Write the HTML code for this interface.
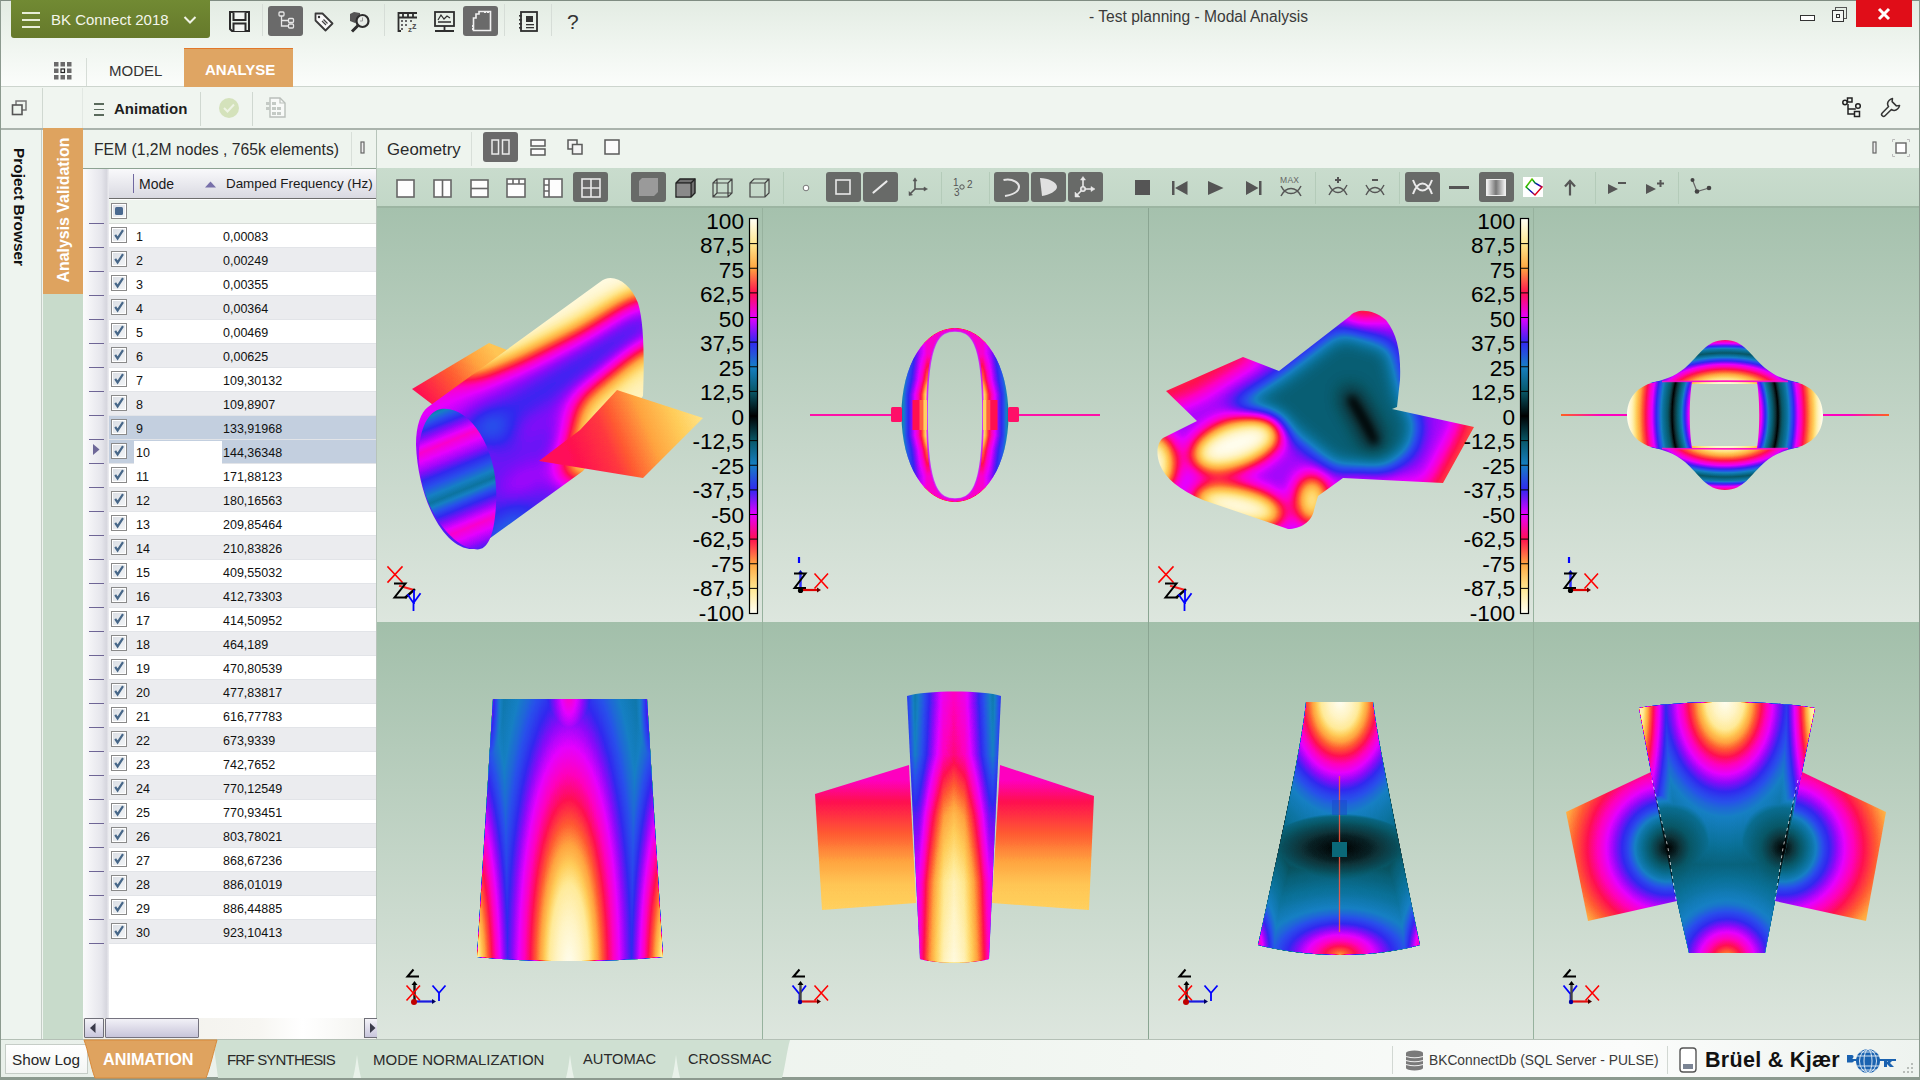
<!DOCTYPE html>
<html><head><meta charset="utf-8">
<style>
*{box-sizing:border-box;margin:0;padding:0}
html,body{width:1920px;height:1080px;overflow:hidden;background:#eef4ef;font-family:"Liberation Sans",sans-serif;color:#222}
.a{position:absolute}
.t{position:absolute;white-space:nowrap;line-height:1}
.rt{font-size:12.5px;color:#111}
.cb{position:absolute;left:111px;width:16px;height:16px;border:1px solid #8a8a8a;background:linear-gradient(135deg,#d9dde3,#f4f6f8);box-shadow:inset 0 0 0 1px #fff}
.cb svg{position:absolute;left:0;top:0}
.ib{position:absolute;background:#6a6a6a;border-radius:3px}
.sep{position:absolute;width:1px;background:#d6ddd7}
svg{position:absolute;overflow:visible}
</style></head><body>
<div class="a" style="left:0;top:0;width:1920px;height:1080px;border:1px solid #8c9a8f;border-top-color:#7f8c82"></div>
<!-- title/ribbon area -->
<div class="a" style="left:1px;top:1px;width:1918px;height:85px;background:linear-gradient(#e3ece3,#eef4ee 45%,#fbfdfb)"></div>
<div class="a" style="left:1px;top:86px;width:1918px;height:1px;background:#cdd5ce"></div>
<div class="a" style="left:1px;top:87px;width:1918px;height:41px;background:#f0f5f0"></div>
<div class="a" style="left:1px;top:128px;width:1918px;height:2px;background:#aab3ac"></div>

<!-- green app button -->
<div class="a" style="left:11px;top:0;width:199px;height:38px;background:linear-gradient(#718a33,#66792b);border-radius:0 0 3px 3px"></div>
<div class="a" style="left:22px;top:12px;width:18px;height:2px;background:#e8eed8"></div>
<div class="a" style="left:22px;top:19px;width:18px;height:2px;background:#e8eed8"></div>
<div class="a" style="left:22px;top:26px;width:18px;height:2px;background:#e8eed8"></div>
<div class="t" style="left:51px;top:12px;font-size:15px;color:#f4f6ea">BK Connect 2018</div>
<svg style="left:183px;top:15px" width="14" height="10"><path d="M1.5 2 L7 7.5 L12.5 2" stroke="#f0f3e6" stroke-width="2" fill="none"/></svg>

<!-- title -->
<div class="t" style="left:1089px;top:9px;font-size:15.6px;color:#3a3a3a">- Test planning - Modal Analysis</div>
<div class="a" style="left:1800px;top:15px;width:15px;height:6px;border:1.5px solid #333;background:#fff"></div>
<div class="a" style="left:1835px;top:7px;width:12px;height:12px;border:1.5px solid #555"></div>
<div class="a" style="left:1832px;top:10px;width:12px;height:12px;border:1.5px solid #333;background:#f2f6f2"></div>
<div class="a" style="left:1836px;top:14px;width:4px;height:4px;border:1.5px solid #333"></div>
<div class="a" style="left:1856px;top:0;width:56px;height:27px;background:#e00d18"></div>
<svg style="left:1878px;top:8px" width="12" height="12"><path d="M1 1 L11 11 M11 1 L1 11" stroke="#fff" stroke-width="3"/></svg>

<!-- tabs row -->
<div class="a" style="left:184px;top:48px;width:109px;height:39px;background:#dfa563;border-top:1px solid #e2782b"></div>
<div class="t" style="left:205px;top:62px;font-size:15px;font-weight:700;color:#fff">ANALYSE</div>
<div class="t" style="left:109px;top:63px;font-size:15px;color:#333">MODEL</div>

<!-- animation row -->
<div class="t" style="left:114px;top:101px;font-size:15px;font-weight:700;color:#1e1e1e">Animation</div>

<!-- ribbon icons -->
<svg style="left:229px;top:11px" width="21" height="21" viewBox="0 0 21 21"><path d="M1 1 H20 V20 H3 L1 18Z" fill="none" stroke="#2a2a2a" stroke-width="2"/><path d="M4.5 1.5 V9 H16.5 V1.5 M4.5 20 V12.5 H16.5 V20" fill="#f2f5f2" stroke="#2a2a2a" stroke-width="2"/></svg>
<div class="sep" style="left:262px;top:4px;height:32px"></div>
<div class="ib" style="left:268px;top:6px;width:35px;height:30px"></div>
<svg style="left:278px;top:11px" width="17" height="18" viewBox="0 0 17 18"><g fill="none" stroke="#e6e6e6" stroke-width="1.3"><rect x="1" y="1" width="5" height="4" rx="1"/><rect x="10.5" y="7.5" width="5" height="4" rx="1"/><rect x="10.5" y="13" width="5" height="4" rx="1"/><path d="M3.5 5 V15 H10.5 M3.5 9.5 H10.5"/></g></svg>
<svg style="left:314px;top:12px" width="20" height="20" viewBox="0 0 20 20"><path d="M1.5 1.5 H8.5 L18.5 11.5 L11.5 18.5 L1.5 8.5Z" fill="#fafafa" stroke="#3a3a3a" stroke-width="1.8" stroke-linejoin="round"/><circle cx="5" cy="5" r="1.2" fill="#333"/><path d="M8 9 L12 13 M9.5 7.5 L13.5 11.5" stroke="#444" stroke-width="1.2"/></svg>
<svg style="left:349px;top:11px" width="22" height="22" viewBox="0 0 22 22"><path d="M1 3 L5 1 L11 2 V10 L6 12 L1 10Z" fill="#555"/><circle cx="13.5" cy="10" r="6" fill="#e8ede8" stroke="#2e2e2e" stroke-width="2.2"/><path d="M9 14.5 L3 20.5" stroke="#2e2e2e" stroke-width="3"/><path d="M13.5 6.5 V10 H11" stroke="#999" stroke-width="1" fill="none"/></svg>
<div class="sep" style="left:384px;top:4px;height:32px"></div>
<svg style="left:397px;top:11px" width="21" height="21" viewBox="0 0 21 21"><g stroke="#2e2e2e" fill="none" stroke-width="1.8"><path d="M1 2 H20 M1 6.5 H20 M1.5 1 V20 H4 M6 1 V6.5 M11 1 V6.5 M16 1 V6.5"/></g><g fill="#666"><rect x="4" y="9" width="2" height="2"/><rect x="4" y="13" width="2" height="2"/><rect x="4" y="17" width="2" height="2"/><rect x="8" y="9" width="2" height="2"/><rect x="8" y="13" width="2" height="2"/><rect x="13" y="9" width="2" height="2"/></g><text x="11" y="21" font-size="8" font-weight="700" fill="#555" font-family="Liberation Sans">z</text><text x="15" y="18" font-size="9" font-weight="700" fill="#555" font-family="Liberation Sans">z</text></svg>
<svg style="left:434px;top:11px" width="21" height="21" viewBox="0 0 21 21"><g stroke="#2e2e2e" fill="none" stroke-width="1.8"><rect x="1" y="1" width="19" height="14"/><path d="M10.5 15 V19 M1 20 H20"/><path d="M4 9 L7 4 L10 8 L13 5 L16 7" stroke-width="1.2"/><path d="M4 11 H17" stroke-width="1.5"/></g></svg>
<div class="ib" style="left:463px;top:6px;width:35px;height:30px"></div>
<svg style="left:471px;top:10px" width="21" height="22" viewBox="0 0 21 22"><path d="M8 1.5 H19.5 V20.5 H2.5 V8 H5 V4 H8Z" fill="none" stroke="#f0f0f0" stroke-width="1.6"/><rect x="13" y="1" width="2" height="2" fill="#f0f0f0"/><rect x="16" y="1" width="2" height="2" fill="#f0f0f0"/><rect x="1" y="15" width="2" height="2" fill="#f0f0f0"/><rect x="1" y="18" width="2" height="2" fill="#f0f0f0"/></svg>
<div class="sep" style="left:504px;top:4px;height:32px"></div>
<svg style="left:518px;top:11px" width="20" height="21" viewBox="0 0 20 21"><rect x="3" y="1" width="16" height="19" fill="none" stroke="#2e2e2e" stroke-width="1.8"/><g fill="#333"><rect x="1" y="4" width="3" height="1.6"/><rect x="1" y="8" width="3" height="1.6"/><rect x="1" y="12" width="3" height="1.6"/><rect x="1" y="16" width="3" height="1.6"/><rect x="8" y="5" width="7" height="6"/><rect x="8" y="13" width="8" height="1.3"/><rect x="8" y="16" width="8" height="1.3"/></g></svg>
<div class="sep" style="left:551px;top:4px;height:32px"></div>
<div class="t" style="left:567px;top:11px;font-size:21px;color:#333">?</div>

<!-- second row: grid icon + separators -->
<svg style="left:54px;top:62px" width="18" height="18" viewBox="0 0 18 18"><g fill="#6a6a6a"><rect x="0" y="0" width="4.5" height="4.5"/><rect x="6.5" y="0" width="4.5" height="4.5"/><rect x="13" y="0" width="4.5" height="4.5"/><rect x="0" y="6.5" width="4.5" height="4.5"/><rect x="13" y="6.5" width="4.5" height="4.5"/><rect x="0" y="13" width="4.5" height="4.5"/><rect x="6.5" y="13" width="4.5" height="4.5"/><rect x="13" y="13" width="4.5" height="4.5"/></g><rect x="7" y="7" width="3.5" height="3.5" fill="none" stroke="#222" stroke-width="1.2"/></svg>
<div class="sep" style="left:86px;top:58px;height:28px"></div>

<!-- third row icons -->
<svg style="left:11px;top:100px" width="17" height="16" viewBox="0 0 17 16"><rect x="5" y="1" width="10" height="9" fill="none" stroke="#777" stroke-width="1.5"/><rect x="1.5" y="5" width="9.5" height="9.5" fill="#eef4ee" stroke="#555" stroke-width="1.6"/></svg>
<div class="sep" style="left:42px;top:88px;height:40px;background:#d0d8d1"></div>
<div class="sep" style="left:82px;top:88px;height:40px;background:#e2e8e3"></div>
<div class="a" style="left:94px;top:103px;width:10px;height:1.5px;background:#5a6a5c"></div>
<div class="a" style="left:94px;top:108.5px;width:10px;height:1.5px;background:#5a6a5c"></div>
<div class="a" style="left:94px;top:114px;width:10px;height:1.5px;background:#5a6a5c"></div>
<div class="sep" style="left:200px;top:92px;height:34px;background:#d0d8d1"></div>
<svg style="left:218px;top:97px" width="22" height="22" viewBox="0 0 22 22"><circle cx="11" cy="11" r="10" fill="#d4e2bb"/><path d="M6 11 L9.5 14.5 L16 7.5" stroke="#eef4e4" stroke-width="2" fill="none"/></svg>
<div class="sep" style="left:252px;top:92px;height:34px;background:#d0d8d1"></div>
<svg style="left:265px;top:97px" width="22" height="21" viewBox="0 0 22 21"><path d="M5 1 H15 L20 6 V20 H5Z" fill="#f8faf8" stroke="#b9bfba" stroke-width="1.4"/><path d="M15 1 V6 H20" fill="none" stroke="#b9bfba" stroke-width="1.2"/><g fill="#c4cac5"><rect x="1" y="5" width="4" height="3"/><rect x="7" y="5" width="4" height="3"/><rect x="1" y="10" width="4" height="3"/><rect x="7" y="10" width="4" height="3"/><rect x="12" y="10" width="4" height="3"/><rect x="7" y="15" width="4" height="3"/><rect x="12" y="15" width="4" height="3"/></g></svg>

<!-- right side of row 3 -->
<svg style="left:1842px;top:97px" width="20" height="22" viewBox="0 0 20 22"><g fill="none" stroke="#222" stroke-width="1.5"><rect x="5.5" y="1" width="4.5" height="4"/><circle cx="3" cy="5.5" r="2.2"/><circle cx="16" cy="9" r="2.3"/><rect x="12.5" y="14.5" width="5" height="5"/><path d="M6 7 V17 H12.5 M6 12 H13.8"/></g></svg>
<svg style="left:1879px;top:97px" width="22" height="22" viewBox="0 0 22 22"><path transform="rotate(45 11 11)" d="M9 11 V20 A2 2 0 0 0 13 20 V11 C16 10.5 17 8 17 6 C17 4.5 16.5 3.2 16 2.5 L14 5 H8 L6 2.5 C5.5 3.2 5 4.5 5 6 C5 8 6 10.5 9 11Z" fill="none" stroke="#333" stroke-width="1.5" stroke-linejoin="round"/></svg>

<!-- left strip -->
<div class="a" style="left:41px;top:130px;width:1px;height:909px;background:#c4cdc6"></div>
<div class="a" style="left:43px;top:130px;width:40px;height:909px;background:#c8dbcb"></div>
<div class="a" style="left:43px;top:128px;width:40px;height:166px;background:#dea35f"></div>

<!-- list panel -->
<div class="a" style="left:83px;top:130px;width:293px;height:38px;background:#eef4ee"></div>
<div class="t" style="left:94px;top:142px;font-size:15.7px;color:#2a2a2a">FEM (1,2M nodes , 765k elements)</div>
<div class="sep" style="left:351px;top:132px;height:34px;background:#d8dfd9"></div>
<svg style="left:360px;top:141px" width="6" height="13" viewBox="0 0 6 13"><rect x="1" y="1" width="3" height="11" fill="#eee" stroke="#666" stroke-width="1.2"/></svg>
<div class="a" style="left:83px;top:168px;width:293px;height:1px;background:#8da292"></div>
<div class="a" style="left:83px;top:169px;width:293px;height:870px;background:#fff"></div>
<div class="a" style="left:83px;top:169px;width:26px;height:849px;background:linear-gradient(90deg,#fbfbfc,#e6e6ec 70%,#d6d6de 90%,#eeeef2)"></div>
<div class="a" style="left:109px;top:169px;width:267px;height:30px;background:linear-gradient(#f9f9fb,#e6e6ec 60%,#d9d9e1);border-bottom:1px solid #6d6d6d"></div>
<div class="a" style="left:133px;top:174px;width:1px;height:19px;background:#7068a0"></div>
<div class="t" style="left:139px;top:177px;font-size:14px;color:#1a1a1a">Mode</div>
<svg style="left:205px;top:181px" width="11" height="7"><path d="M0 6.5 L5.5 0.5 L11 6.5Z" fill="#7870aa"/></svg>
<div class="t" style="left:226px;top:177px;font-size:13.4px;color:#1a1a1a">Damped Frequency (Hz)</div>
<div class="a" style="left:109px;top:200px;width:267px;height:24px;background:#eef4ee;border-bottom:1px solid #d8dcd8"></div>
<div class="cb" style="top:203px"><div class="a" style="left:3px;top:3px;width:8px;height:8px;background:#49698f;border-radius:1.5px"></div></div>
<div class="a" style="left:109px;top:224px;width:267px;height:24px;background:#ffffff;border-bottom:1px solid #e2e4e8"></div>
<div class="cb" style="top:227px"><svg width="14" height="14" viewBox="0 0 14 14"><path d="M3.2 6.8 L5.6 10.4 L11 2.2" stroke="#476788" stroke-width="2.2" fill="none"/></svg></div>
<div class="t rt" style="top:231px;left:136px">1</div>
<div class="t rt" style="top:231px;left:223px">0,00083</div>
<div class="a" style="left:89px;top:247px;width:15px;height:1px;background:#6e6595"></div>
<div class="a" style="left:109px;top:248px;width:267px;height:24px;background:#ebecef;border-bottom:1px solid #e2e4e8"></div>
<div class="cb" style="top:251px"><svg width="14" height="14" viewBox="0 0 14 14"><path d="M3.2 6.8 L5.6 10.4 L11 2.2" stroke="#476788" stroke-width="2.2" fill="none"/></svg></div>
<div class="t rt" style="top:255px;left:136px">2</div>
<div class="t rt" style="top:255px;left:223px">0,00249</div>
<div class="a" style="left:89px;top:271px;width:15px;height:1px;background:#6e6595"></div>
<div class="a" style="left:109px;top:272px;width:267px;height:24px;background:#ffffff;border-bottom:1px solid #e2e4e8"></div>
<div class="cb" style="top:275px"><svg width="14" height="14" viewBox="0 0 14 14"><path d="M3.2 6.8 L5.6 10.4 L11 2.2" stroke="#476788" stroke-width="2.2" fill="none"/></svg></div>
<div class="t rt" style="top:279px;left:136px">3</div>
<div class="t rt" style="top:279px;left:223px">0,00355</div>
<div class="a" style="left:89px;top:295px;width:15px;height:1px;background:#6e6595"></div>
<div class="a" style="left:109px;top:296px;width:267px;height:24px;background:#ebecef;border-bottom:1px solid #e2e4e8"></div>
<div class="cb" style="top:299px"><svg width="14" height="14" viewBox="0 0 14 14"><path d="M3.2 6.8 L5.6 10.4 L11 2.2" stroke="#476788" stroke-width="2.2" fill="none"/></svg></div>
<div class="t rt" style="top:303px;left:136px">4</div>
<div class="t rt" style="top:303px;left:223px">0,00364</div>
<div class="a" style="left:89px;top:319px;width:15px;height:1px;background:#6e6595"></div>
<div class="a" style="left:109px;top:320px;width:267px;height:24px;background:#ffffff;border-bottom:1px solid #e2e4e8"></div>
<div class="cb" style="top:323px"><svg width="14" height="14" viewBox="0 0 14 14"><path d="M3.2 6.8 L5.6 10.4 L11 2.2" stroke="#476788" stroke-width="2.2" fill="none"/></svg></div>
<div class="t rt" style="top:327px;left:136px">5</div>
<div class="t rt" style="top:327px;left:223px">0,00469</div>
<div class="a" style="left:89px;top:343px;width:15px;height:1px;background:#6e6595"></div>
<div class="a" style="left:109px;top:344px;width:267px;height:24px;background:#ebecef;border-bottom:1px solid #e2e4e8"></div>
<div class="cb" style="top:347px"><svg width="14" height="14" viewBox="0 0 14 14"><path d="M3.2 6.8 L5.6 10.4 L11 2.2" stroke="#476788" stroke-width="2.2" fill="none"/></svg></div>
<div class="t rt" style="top:351px;left:136px">6</div>
<div class="t rt" style="top:351px;left:223px">0,00625</div>
<div class="a" style="left:89px;top:367px;width:15px;height:1px;background:#6e6595"></div>
<div class="a" style="left:109px;top:368px;width:267px;height:24px;background:#ffffff;border-bottom:1px solid #e2e4e8"></div>
<div class="cb" style="top:371px"><svg width="14" height="14" viewBox="0 0 14 14"><path d="M3.2 6.8 L5.6 10.4 L11 2.2" stroke="#476788" stroke-width="2.2" fill="none"/></svg></div>
<div class="t rt" style="top:375px;left:136px">7</div>
<div class="t rt" style="top:375px;left:223px">109,30132</div>
<div class="a" style="left:89px;top:391px;width:15px;height:1px;background:#6e6595"></div>
<div class="a" style="left:109px;top:392px;width:267px;height:24px;background:#ebecef;border-bottom:1px solid #e2e4e8"></div>
<div class="cb" style="top:395px"><svg width="14" height="14" viewBox="0 0 14 14"><path d="M3.2 6.8 L5.6 10.4 L11 2.2" stroke="#476788" stroke-width="2.2" fill="none"/></svg></div>
<div class="t rt" style="top:399px;left:136px">8</div>
<div class="t rt" style="top:399px;left:223px">109,8907</div>
<div class="a" style="left:89px;top:415px;width:15px;height:1px;background:#6e6595"></div>
<div class="a" style="left:109px;top:416px;width:267px;height:24px;background:#c3cfdf;border-bottom:1px solid #e2e4e8"></div>
<div class="cb" style="top:419px"><svg width="14" height="14" viewBox="0 0 14 14"><path d="M3.2 6.8 L5.6 10.4 L11 2.2" stroke="#476788" stroke-width="2.2" fill="none"/></svg></div>
<div class="t rt" style="top:423px;left:136px">9</div>
<div class="t rt" style="top:423px;left:223px">133,91968</div>
<div class="a" style="left:89px;top:439px;width:15px;height:1px;background:#6e6595"></div>
<div class="a" style="left:109px;top:440px;width:267px;height:24px;background:#c3cfdf;border-bottom:1px solid #e2e4e8"></div>
<div class="a" style="left:134px;top:441px;width:88px;height:23px;background:#fff"></div>
<div class="cb" style="top:443px"><svg width="14" height="14" viewBox="0 0 14 14"><path d="M3.2 6.8 L5.6 10.4 L11 2.2" stroke="#476788" stroke-width="2.2" fill="none"/></svg></div>
<div class="t rt" style="top:447px;left:136px">10</div>
<div class="t rt" style="top:447px;left:223px">144,36348</div>
<div class="a" style="left:89px;top:463px;width:15px;height:1px;background:#6e6595"></div>
<div class="a" style="left:109px;top:464px;width:267px;height:24px;background:#ffffff;border-bottom:1px solid #e2e4e8"></div>
<div class="cb" style="top:467px"><svg width="14" height="14" viewBox="0 0 14 14"><path d="M3.2 6.8 L5.6 10.4 L11 2.2" stroke="#476788" stroke-width="2.2" fill="none"/></svg></div>
<div class="t rt" style="top:471px;left:136px">11</div>
<div class="t rt" style="top:471px;left:223px">171,88123</div>
<div class="a" style="left:89px;top:487px;width:15px;height:1px;background:#6e6595"></div>
<div class="a" style="left:109px;top:488px;width:267px;height:24px;background:#ebecef;border-bottom:1px solid #e2e4e8"></div>
<div class="cb" style="top:491px"><svg width="14" height="14" viewBox="0 0 14 14"><path d="M3.2 6.8 L5.6 10.4 L11 2.2" stroke="#476788" stroke-width="2.2" fill="none"/></svg></div>
<div class="t rt" style="top:495px;left:136px">12</div>
<div class="t rt" style="top:495px;left:223px">180,16563</div>
<div class="a" style="left:89px;top:511px;width:15px;height:1px;background:#6e6595"></div>
<div class="a" style="left:109px;top:512px;width:267px;height:24px;background:#ffffff;border-bottom:1px solid #e2e4e8"></div>
<div class="cb" style="top:515px"><svg width="14" height="14" viewBox="0 0 14 14"><path d="M3.2 6.8 L5.6 10.4 L11 2.2" stroke="#476788" stroke-width="2.2" fill="none"/></svg></div>
<div class="t rt" style="top:519px;left:136px">13</div>
<div class="t rt" style="top:519px;left:223px">209,85464</div>
<div class="a" style="left:89px;top:535px;width:15px;height:1px;background:#6e6595"></div>
<div class="a" style="left:109px;top:536px;width:267px;height:24px;background:#ebecef;border-bottom:1px solid #e2e4e8"></div>
<div class="cb" style="top:539px"><svg width="14" height="14" viewBox="0 0 14 14"><path d="M3.2 6.8 L5.6 10.4 L11 2.2" stroke="#476788" stroke-width="2.2" fill="none"/></svg></div>
<div class="t rt" style="top:543px;left:136px">14</div>
<div class="t rt" style="top:543px;left:223px">210,83826</div>
<div class="a" style="left:89px;top:559px;width:15px;height:1px;background:#6e6595"></div>
<div class="a" style="left:109px;top:560px;width:267px;height:24px;background:#ffffff;border-bottom:1px solid #e2e4e8"></div>
<div class="cb" style="top:563px"><svg width="14" height="14" viewBox="0 0 14 14"><path d="M3.2 6.8 L5.6 10.4 L11 2.2" stroke="#476788" stroke-width="2.2" fill="none"/></svg></div>
<div class="t rt" style="top:567px;left:136px">15</div>
<div class="t rt" style="top:567px;left:223px">409,55032</div>
<div class="a" style="left:89px;top:583px;width:15px;height:1px;background:#6e6595"></div>
<div class="a" style="left:109px;top:584px;width:267px;height:24px;background:#ebecef;border-bottom:1px solid #e2e4e8"></div>
<div class="cb" style="top:587px"><svg width="14" height="14" viewBox="0 0 14 14"><path d="M3.2 6.8 L5.6 10.4 L11 2.2" stroke="#476788" stroke-width="2.2" fill="none"/></svg></div>
<div class="t rt" style="top:591px;left:136px">16</div>
<div class="t rt" style="top:591px;left:223px">412,73303</div>
<div class="a" style="left:89px;top:607px;width:15px;height:1px;background:#6e6595"></div>
<div class="a" style="left:109px;top:608px;width:267px;height:24px;background:#ffffff;border-bottom:1px solid #e2e4e8"></div>
<div class="cb" style="top:611px"><svg width="14" height="14" viewBox="0 0 14 14"><path d="M3.2 6.8 L5.6 10.4 L11 2.2" stroke="#476788" stroke-width="2.2" fill="none"/></svg></div>
<div class="t rt" style="top:615px;left:136px">17</div>
<div class="t rt" style="top:615px;left:223px">414,50952</div>
<div class="a" style="left:89px;top:631px;width:15px;height:1px;background:#6e6595"></div>
<div class="a" style="left:109px;top:632px;width:267px;height:24px;background:#ebecef;border-bottom:1px solid #e2e4e8"></div>
<div class="cb" style="top:635px"><svg width="14" height="14" viewBox="0 0 14 14"><path d="M3.2 6.8 L5.6 10.4 L11 2.2" stroke="#476788" stroke-width="2.2" fill="none"/></svg></div>
<div class="t rt" style="top:639px;left:136px">18</div>
<div class="t rt" style="top:639px;left:223px">464,189</div>
<div class="a" style="left:89px;top:655px;width:15px;height:1px;background:#6e6595"></div>
<div class="a" style="left:109px;top:656px;width:267px;height:24px;background:#ffffff;border-bottom:1px solid #e2e4e8"></div>
<div class="cb" style="top:659px"><svg width="14" height="14" viewBox="0 0 14 14"><path d="M3.2 6.8 L5.6 10.4 L11 2.2" stroke="#476788" stroke-width="2.2" fill="none"/></svg></div>
<div class="t rt" style="top:663px;left:136px">19</div>
<div class="t rt" style="top:663px;left:223px">470,80539</div>
<div class="a" style="left:89px;top:679px;width:15px;height:1px;background:#6e6595"></div>
<div class="a" style="left:109px;top:680px;width:267px;height:24px;background:#ebecef;border-bottom:1px solid #e2e4e8"></div>
<div class="cb" style="top:683px"><svg width="14" height="14" viewBox="0 0 14 14"><path d="M3.2 6.8 L5.6 10.4 L11 2.2" stroke="#476788" stroke-width="2.2" fill="none"/></svg></div>
<div class="t rt" style="top:687px;left:136px">20</div>
<div class="t rt" style="top:687px;left:223px">477,83817</div>
<div class="a" style="left:89px;top:703px;width:15px;height:1px;background:#6e6595"></div>
<div class="a" style="left:109px;top:704px;width:267px;height:24px;background:#ffffff;border-bottom:1px solid #e2e4e8"></div>
<div class="cb" style="top:707px"><svg width="14" height="14" viewBox="0 0 14 14"><path d="M3.2 6.8 L5.6 10.4 L11 2.2" stroke="#476788" stroke-width="2.2" fill="none"/></svg></div>
<div class="t rt" style="top:711px;left:136px">21</div>
<div class="t rt" style="top:711px;left:223px">616,77783</div>
<div class="a" style="left:89px;top:727px;width:15px;height:1px;background:#6e6595"></div>
<div class="a" style="left:109px;top:728px;width:267px;height:24px;background:#ebecef;border-bottom:1px solid #e2e4e8"></div>
<div class="cb" style="top:731px"><svg width="14" height="14" viewBox="0 0 14 14"><path d="M3.2 6.8 L5.6 10.4 L11 2.2" stroke="#476788" stroke-width="2.2" fill="none"/></svg></div>
<div class="t rt" style="top:735px;left:136px">22</div>
<div class="t rt" style="top:735px;left:223px">673,9339</div>
<div class="a" style="left:89px;top:751px;width:15px;height:1px;background:#6e6595"></div>
<div class="a" style="left:109px;top:752px;width:267px;height:24px;background:#ffffff;border-bottom:1px solid #e2e4e8"></div>
<div class="cb" style="top:755px"><svg width="14" height="14" viewBox="0 0 14 14"><path d="M3.2 6.8 L5.6 10.4 L11 2.2" stroke="#476788" stroke-width="2.2" fill="none"/></svg></div>
<div class="t rt" style="top:759px;left:136px">23</div>
<div class="t rt" style="top:759px;left:223px">742,7652</div>
<div class="a" style="left:89px;top:775px;width:15px;height:1px;background:#6e6595"></div>
<div class="a" style="left:109px;top:776px;width:267px;height:24px;background:#ebecef;border-bottom:1px solid #e2e4e8"></div>
<div class="cb" style="top:779px"><svg width="14" height="14" viewBox="0 0 14 14"><path d="M3.2 6.8 L5.6 10.4 L11 2.2" stroke="#476788" stroke-width="2.2" fill="none"/></svg></div>
<div class="t rt" style="top:783px;left:136px">24</div>
<div class="t rt" style="top:783px;left:223px">770,12549</div>
<div class="a" style="left:89px;top:799px;width:15px;height:1px;background:#6e6595"></div>
<div class="a" style="left:109px;top:800px;width:267px;height:24px;background:#ffffff;border-bottom:1px solid #e2e4e8"></div>
<div class="cb" style="top:803px"><svg width="14" height="14" viewBox="0 0 14 14"><path d="M3.2 6.8 L5.6 10.4 L11 2.2" stroke="#476788" stroke-width="2.2" fill="none"/></svg></div>
<div class="t rt" style="top:807px;left:136px">25</div>
<div class="t rt" style="top:807px;left:223px">770,93451</div>
<div class="a" style="left:89px;top:823px;width:15px;height:1px;background:#6e6595"></div>
<div class="a" style="left:109px;top:824px;width:267px;height:24px;background:#ebecef;border-bottom:1px solid #e2e4e8"></div>
<div class="cb" style="top:827px"><svg width="14" height="14" viewBox="0 0 14 14"><path d="M3.2 6.8 L5.6 10.4 L11 2.2" stroke="#476788" stroke-width="2.2" fill="none"/></svg></div>
<div class="t rt" style="top:831px;left:136px">26</div>
<div class="t rt" style="top:831px;left:223px">803,78021</div>
<div class="a" style="left:89px;top:847px;width:15px;height:1px;background:#6e6595"></div>
<div class="a" style="left:109px;top:848px;width:267px;height:24px;background:#ffffff;border-bottom:1px solid #e2e4e8"></div>
<div class="cb" style="top:851px"><svg width="14" height="14" viewBox="0 0 14 14"><path d="M3.2 6.8 L5.6 10.4 L11 2.2" stroke="#476788" stroke-width="2.2" fill="none"/></svg></div>
<div class="t rt" style="top:855px;left:136px">27</div>
<div class="t rt" style="top:855px;left:223px">868,67236</div>
<div class="a" style="left:89px;top:871px;width:15px;height:1px;background:#6e6595"></div>
<div class="a" style="left:109px;top:872px;width:267px;height:24px;background:#ebecef;border-bottom:1px solid #e2e4e8"></div>
<div class="cb" style="top:875px"><svg width="14" height="14" viewBox="0 0 14 14"><path d="M3.2 6.8 L5.6 10.4 L11 2.2" stroke="#476788" stroke-width="2.2" fill="none"/></svg></div>
<div class="t rt" style="top:879px;left:136px">28</div>
<div class="t rt" style="top:879px;left:223px">886,01019</div>
<div class="a" style="left:89px;top:895px;width:15px;height:1px;background:#6e6595"></div>
<div class="a" style="left:109px;top:896px;width:267px;height:24px;background:#ffffff;border-bottom:1px solid #e2e4e8"></div>
<div class="cb" style="top:899px"><svg width="14" height="14" viewBox="0 0 14 14"><path d="M3.2 6.8 L5.6 10.4 L11 2.2" stroke="#476788" stroke-width="2.2" fill="none"/></svg></div>
<div class="t rt" style="top:903px;left:136px">29</div>
<div class="t rt" style="top:903px;left:223px">886,44885</div>
<div class="a" style="left:89px;top:919px;width:15px;height:1px;background:#6e6595"></div>
<div class="a" style="left:109px;top:920px;width:267px;height:24px;background:#ebecef;border-bottom:1px solid #e2e4e8"></div>
<div class="cb" style="top:923px"><svg width="14" height="14" viewBox="0 0 14 14"><path d="M3.2 6.8 L5.6 10.4 L11 2.2" stroke="#476788" stroke-width="2.2" fill="none"/></svg></div>
<div class="t rt" style="top:927px;left:136px">30</div>
<div class="t rt" style="top:927px;left:223px">923,10413</div>
<div class="a" style="left:89px;top:943px;width:15px;height:1px;background:#6e6595"></div>
<svg style="left:93px;top:444px" width="7" height="11"><path d="M0 0 L6.5 5.5 L0 11Z" fill="#6e6898"/></svg>

<!-- geometry panel -->
<div class="a" style="left:376px;top:130px;width:1px;height:909px;background:#b7c4ba"></div>
<div class="a" style="left:377px;top:130px;width:1542px;height:38px;background:#eef4ee"></div>
<div class="t" style="left:387px;top:142px;font-size:16.8px;color:#2a2a2a">Geometry</div>
<div class="a" style="left:377px;top:168px;width:1542px;height:40px;background:linear-gradient(#c9dccd,#c2d7c7)"></div>
<div class="a" style="left:377px;top:206px;width:1542px;height:2px;background:#9cb5a2"></div>

<!-- viewports -->
<div class="a" style="left:377px;top:208px;width:1542px;height:414px;background:linear-gradient(#a5c1ad,#dde6de)"></div>
<div class="a" style="left:377px;top:622px;width:1542px;height:417px;background:linear-gradient(#a2bfaa,#dde6de)"></div>
<div class="a" style="left:762px;top:208px;width:1px;height:831px;background:#97b29e"></div>
<div class="a" style="left:1148px;top:208px;width:1px;height:831px;background:#8aa592"></div>
<div class="a" style="left:1533px;top:208px;width:1px;height:831px;background:#97b29e"></div>

<!-- rotated texts -->
<div class="t" style="left:19px;top:207px;font-size:15.4px;font-weight:700;color:#111;transform:translate(-50%,-50%) rotate(90deg);transform-origin:center">Project Browser</div>
<div class="t" style="left:64px;top:210px;font-size:15.9px;font-weight:700;color:#fff;transform:translate(-50%,-50%) rotate(-90deg);transform-origin:center">Analysis Validation</div>
<div class="a" style="left:89px;top:223px;width:15px;height:1px;background:#6e6595"></div>

<!-- geometry header buttons -->
<div class="sep" style="left:471px;top:132px;height:34px;background:#d8dfd9"></div>
<div class="ib" style="left:483px;top:132px;width:35px;height:30px"></div>
<svg style="left:491px;top:139px" width="19" height="16" viewBox="0 0 19 16"><g fill="none" stroke="#eaeaea" stroke-width="1.5"><rect x="1" y="1" width="6.5" height="14"/><rect x="11.5" y="1" width="6.5" height="14"/></g></svg>
<svg style="left:530px;top:139px" width="16" height="17" viewBox="0 0 16 17"><g fill="#fbfbfb" stroke="#5a5a5a" stroke-width="1.5"><rect x="1" y="1" width="14" height="6"/><rect x="1" y="10" width="14" height="6"/></g></svg>
<svg style="left:567px;top:139px" width="16" height="16" viewBox="0 0 16 16"><g fill="#f4f4f4" stroke="#5a5a5a" stroke-width="1.5"><rect x="1" y="1" width="9" height="9"/><rect x="5.5" y="5.5" width="9.5" height="9.5"/></g></svg>
<svg style="left:604px;top:139px" width="16" height="16" viewBox="0 0 16 16"><rect x="1" y="1" width="14" height="14" fill="#fbfbfb" stroke="#5a5a5a" stroke-width="1.5"/></svg>
<svg style="left:1872px;top:141px" width="6" height="13" viewBox="0 0 6 13"><rect x="1" y="1" width="3" height="11" fill="#eee" stroke="#666" stroke-width="1.2"/></svg>
<svg style="left:1892px;top:139px" width="18" height="18" viewBox="0 0 18 18"><rect x="4" y="4" width="10" height="10" fill="#fff" stroke="#666" stroke-width="1.4"/><path d="M0.5 3 V0.5 H3 M15 0.5 H17.5 V3 M17.5 15 V17.5 H15 M3 17.5 H0.5 V15" stroke="#bbb" fill="none"/></svg>

<!-- toolbar -->
<svg style="left:396px;top:179px" width="19" height="19" viewBox="0 0 19 19"><rect x="1" y="1" width="17" height="17" fill="#fdfdfd" stroke="#666" stroke-width="1.6"/></svg>
<svg style="left:433px;top:179px" width="19" height="19" viewBox="0 0 19 19"><g fill="#fdfdfd" stroke="#666" stroke-width="1.6"><rect x="1" y="1" width="17" height="17"/><path d="M9.5 1 V18"/></g></svg>
<svg style="left:470px;top:179px" width="19" height="19" viewBox="0 0 19 19"><g fill="#fdfdfd" stroke="#666" stroke-width="1.6"><rect x="1" y="1" width="17" height="17"/><path d="M1 9.5 H18"/></g></svg>
<svg style="left:506px;top:178px" width="20" height="20" viewBox="0 0 20 20"><g fill="#fdfdfd" stroke="#666" stroke-width="1.6"><rect x="1" y="1" width="18" height="18"/><path d="M1 6 H19 M7 1 V6 M13 1 V6"/></g></svg>
<svg style="left:543px;top:178px" width="20" height="20" viewBox="0 0 20 20"><g fill="#fdfdfd" stroke="#666" stroke-width="1.6"><rect x="1" y="1" width="18" height="18"/><path d="M6 1 V19 M1 7 H6 M1 13 H6"/></g></svg>
<div class="ib" style="left:573px;top:172px;width:35px;height:30px;background:#686a68"></div>
<svg style="left:581px;top:178px" width="20" height="20" viewBox="0 0 20 20"><g fill="#6a6a6a" stroke="#e8e8e8" stroke-width="1.6"><rect x="1" y="1" width="18" height="18"/><path d="M10 1 V19 M1 10 H19"/></g></svg>
<div class="ib" style="left:631px;top:172px;width:35px;height:30px;background:#686a68"></div>
<svg style="left:638px;top:177px" width="21" height="20" viewBox="0 0 21 20"><path d="M4 1 H20 V15 L16 19 H1 V4Z" fill="#9a9a9a"/></svg>
<svg style="left:675px;top:178px" width="21" height="20" viewBox="0 0 21 20"><path d="M1 5 L5 1 H20 V15 L16 19 H1Z" fill="#707070" stroke="#222" stroke-width="1.4"/><path d="M1 5 H16 V19 M16 5 L20 1" fill="none" stroke="#222" stroke-width="1.4"/><path d="M1.7 5.7 H15.3 V18.3 H1.7Z" fill="#8a8a8a"/></svg>
<svg style="left:712px;top:178px" width="21" height="20" viewBox="0 0 21 20"><g fill="none" stroke="#444" stroke-width="1.2"><path d="M1 5 L5 1 H20 V15 L16 19 H1Z M1 5 H16 V19 M16 5 L20 1 M5 1 V15 H20 M5 15 L1 19"/></g></svg>
<svg style="left:749px;top:178px" width="21" height="20" viewBox="0 0 21 20"><g fill="none" stroke="#444" stroke-width="1.2"><path d="M1 5 L5 1 H20 V15 L16 19 H1Z M1 5 H16 V19 M16 5 L20 1"/></g></svg>
<div class="sep" style="left:783px;top:172px;height:32px;background:#b4cbb9"></div>
<svg style="left:802px;top:184px" width="8" height="8" viewBox="0 0 8 8"><circle cx="4" cy="4" r="2.8" fill="#fff" stroke="#777" stroke-width="1"/></svg>
<div class="ib" style="left:826px;top:172px;width:35px;height:30px;background:#686a68"></div>
<svg style="left:835px;top:179px" width="16" height="16" viewBox="0 0 16 16"><rect x="1" y="1" width="14" height="14" fill="none" stroke="#e8e8e8" stroke-width="1.6"/></svg>
<div class="ib" style="left:863px;top:172px;width:35px;height:30px;background:#686a68"></div>
<svg style="left:872px;top:180px" width="16" height="14" viewBox="0 0 16 14"><path d="M1.5 12.5 L14.5 1.5" stroke="#eaeaea" stroke-width="2.2" stroke-linecap="round"/></svg>
<svg style="left:908px;top:177px" width="20" height="20" viewBox="0 0 20 20"><g stroke="#555" stroke-width="1.6" fill="#555"><path d="M7 12 V3 M7 12 H17 M7 12 L2 17"/><path d="M5 4 L7 0.8 L9 4Z M16 10 L19.5 12 L16 14Z M1 14.5 L1 18.5 L4.5 18Z" stroke-width="0.5"/></g></svg>
<div class="sep" style="left:941px;top:172px;height:32px;background:#b4cbb9"></div>
<div class="t" style="left:953px;top:178px;font-size:10px;color:#555">1</div>
<div class="t" style="left:967px;top:180px;font-size:10px;color:#555">2</div>
<div class="t" style="left:954px;top:188px;font-size:10px;color:#555">3</div>
<svg style="left:959px;top:184px" width="6" height="6" viewBox="0 0 6 6"><circle cx="3" cy="3" r="2.2" fill="none" stroke="#555" stroke-width="1"/></svg>
<div class="sep" style="left:989px;top:172px;height:32px;background:#b4cbb9"></div>
<div class="ib" style="left:994px;top:172px;width:35px;height:30px;background:#686a68"></div>
<svg style="left:1002px;top:178px" width="19" height="19" viewBox="0 0 19 19"><path d="M1.5 2 C10 0 20 5 16 12 C14 15 10 17 3 18" fill="none" stroke="#e4e4e4" stroke-width="2"/></svg>
<div class="ib" style="left:1031px;top:172px;width:35px;height:30px;background:#686a68"></div>
<svg style="left:1039px;top:177px" width="19" height="20" viewBox="0 0 19 20"><path d="M1 1 C9 1 18 5 18 10 C18 14 10 18 3 19 Z" fill="#e0e0e0"/></svg>
<div class="ib" style="left:1068px;top:172px;width:35px;height:30px;background:#686a68"></div>
<svg style="left:1074px;top:176px" width="22" height="22" viewBox="0 0 22 22"><g stroke="#e8e8e8" stroke-width="1.6" fill="#e8e8e8"><path d="M9 13 V3 M9 13 H19 M9 13 L3 19"/><path d="M6.5 4 L9 0.5 L11.5 4Z M17 10.5 L21 13 L17 15.5Z M1 16 V21 H6Z" stroke-width="0.5"/><circle cx="9" cy="13" r="2.2" fill="#888"/></g></svg>
<div class="a" style="left:1135px;top:180px;width:15px;height:15px;background:#555"></div>
<svg style="left:1172px;top:181px" width="16" height="14" viewBox="0 0 16 14"><path d="M0 0 H2.5 V14 H0Z M15.5 0 V14 L3 7Z" fill="#555"/></svg>
<svg style="left:1208px;top:181px" width="16" height="14" viewBox="0 0 16 14"><path d="M0 0 L15.5 7 L0 14Z" fill="#555"/></svg>
<svg style="left:1246px;top:181px" width="16" height="14" viewBox="0 0 16 14"><path d="M0 0 L12.5 7 L0 14Z M13 0 H15.5 V14 H13Z" fill="#555"/></svg>
<div class="t" style="left:1280px;top:176px;font-size:8.5px;color:#666;letter-spacing:0.3px">MAX</div>
<svg style="left:1280px;top:185px" width="22" height="12" viewBox="0 0 22 12"><path d="M1 1 C6 11 16 11 21 1 M1 11 C6 1 16 1 21 11" fill="none" stroke="#555" stroke-width="1.5"/></svg>
<div class="sep" style="left:1315px;top:172px;height:32px;background:#b4cbb9"></div>
<svg style="left:1328px;top:176px" width="20" height="22" viewBox="0 0 20 22"><path d="M7 4 H13 M10 1 V7" stroke="#555" stroke-width="2"/><path d="M1 9 C6 19 14 19 19 9 M1 19 C6 9 14 9 19 19" fill="none" stroke="#555" stroke-width="1.4"/></svg>
<svg style="left:1365px;top:176px" width="20" height="22" viewBox="0 0 20 22"><path d="M7 4 H13" stroke="#555" stroke-width="2"/><path d="M1 9 C6 19 14 19 19 9 M1 19 C6 9 14 9 19 19" fill="none" stroke="#555" stroke-width="1.4"/></svg>
<div class="sep" style="left:1399px;top:172px;height:32px;background:#b4cbb9"></div>
<div class="ib" style="left:1405px;top:172px;width:35px;height:30px;background:#686a68"></div>
<svg style="left:1412px;top:179px" width="21" height="16" viewBox="0 0 21 16"><path d="M1 1 C6 15 15 15 20 1 M1 15 C6 1 15 1 20 15" fill="none" stroke="#eaeaea" stroke-width="2"/></svg>
<div class="a" style="left:1449px;top:186px;width:20px;height:3px;background:#555"></div>
<div class="ib" style="left:1479px;top:172px;width:35px;height:30px;background:#686a68"></div>
<div class="a" style="left:1486px;top:179px;width:20px;height:17px;border:1.5px solid #eee;background:linear-gradient(90deg,#f0f0f0,#777 50%,#f0f0f0)"></div>
<div class="a" style="left:1523px;top:177px;width:20px;height:20px;background:#fff"></div>
<svg style="left:1523px;top:177px" width="20" height="20" viewBox="0 0 20 20"><path d="M9 2 L3 10 L12 18 L19 10 L12 6Z" fill="none" stroke="url(#rb)" stroke-width="1.5"/><defs><linearGradient id="rb" x1="0" y1="0" x2="1" y2="1"><stop offset="0" stop-color="#ee0"/><stop offset=".3" stop-color="#0a0"/><stop offset=".55" stop-color="#00c"/><stop offset=".8" stop-color="#f00"/><stop offset="1" stop-color="#c0c"/></linearGradient></defs></svg>
<svg style="left:1564px;top:180px" width="12" height="16" viewBox="0 0 12 16"><path d="M6 15.5 V3 M1 6.5 L6 1 L11 6.5" fill="none" stroke="#555" stroke-width="2.2"/></svg>
<div class="sep" style="left:1595px;top:172px;height:32px;background:#b4cbb9"></div>
<svg style="left:1608px;top:181px" width="19" height="14" viewBox="0 0 19 14"><path d="M0 3 L10 8 L0 13Z" fill="#555"/><path d="M10 2 H18" stroke="#555" stroke-width="2"/></svg>
<svg style="left:1646px;top:179px" width="19" height="16" viewBox="0 0 19 16"><path d="M0 5 L10 10 L0 15Z" fill="#555"/><path d="M11 4.5 H18 M14.5 1 V8" stroke="#555" stroke-width="2"/></svg>
<div class="sep" style="left:1678px;top:172px;height:32px;background:#b4cbb9"></div>
<svg style="left:1690px;top:178px" width="22" height="18" viewBox="0 0 22 18"><path d="M2.5 2 L7 13.5 L19 10" fill="none" stroke="#666" stroke-width="1.2"/><circle cx="2.5" cy="2" r="2" fill="#444"/><circle cx="7" cy="13.5" r="2.3" fill="#444"/><circle cx="19" cy="10" r="2.3" fill="#444"/></svg>

<svg style="left:0;top:0" width="1920" height="1080"><defs><filter id="cm" color-interpolation-filters="sRGB" filterUnits="userSpaceOnUse" x="0" y="0" width="1920" height="1080"><feComponentTransfer><feFuncR type="table" tableValues="0.000 0.055 0.031 0.039 0.086 0.157 0.196 0.549 0.902 1.000 1.000 1.000 1.000 1.000 1.000 1.000 1.000"/><feFuncG type="table" tableValues="0.000 0.204 0.345 0.439 0.502 0.314 0.157 0.039 0.000 0.000 0.063 0.353 0.647 0.804 0.910 0.961 1.000"/><feFuncB type="table" tableValues="0.000 0.227 0.408 0.588 0.769 0.922 0.941 0.980 1.000 0.745 0.314 0.196 0.251 0.353 0.565 0.784 0.961"/></feComponentTransfer></filter><linearGradient id="L1" gradientUnits="userSpaceOnUse" x1="489" y1="343" x2="418" y2="396" spreadMethod="pad"><stop offset="0.0000" stop-color="#cccccc"/><stop offset="0.5000" stop-color="#b2b2b2"/><stop offset="1.0000" stop-color="#9e9e9e"/></linearGradient><filter id="cmb13" color-interpolation-filters="sRGB" filterUnits="userSpaceOnUse" x="0" y="0" width="1920" height="1080"><feGaussianBlur stdDeviation="13"/><feComponentTransfer><feFuncR type="table" tableValues="0.000 0.055 0.031 0.039 0.086 0.157 0.196 0.549 0.902 1.000 1.000 1.000 1.000 1.000 1.000 1.000 1.000"/><feFuncG type="table" tableValues="0.000 0.204 0.345 0.439 0.502 0.314 0.157 0.039 0.000 0.000 0.063 0.353 0.647 0.804 0.910 0.961 1.000"/><feFuncB type="table" tableValues="0.000 0.227 0.408 0.588 0.769 0.922 0.941 0.980 1.000 0.745 0.314 0.196 0.251 0.353 0.565 0.784 0.961"/></feComponentTransfer></filter><clipPath id="C2"><path d="M428 407 L600 282 C612 272 630 282 638 303 C645 325 644 370 643 396 L583 471 L475 549 C445 552 418 500 416 445 C416 425 421 412 428 407Z"/></clipPath><linearGradient id="L3" gradientUnits="userSpaceOnUse" x1="700" y1="418" x2="575" y2="470" spreadMethod="pad"><stop offset="0.0000" stop-color="#dbdbdb"/><stop offset="0.3500" stop-color="#c2c2c2"/><stop offset="0.7000" stop-color="#a8a8a8"/><stop offset="1.0000" stop-color="#9e9e9e"/></linearGradient><linearGradient id="L4" gradientUnits="userSpaceOnUse" x1="430" y1="395" x2="493" y2="550" spreadMethod="pad"><stop offset="0.0000" stop-color="#2e2e2e"/><stop offset="0.1000" stop-color="#383838"/><stop offset="0.2000" stop-color="#666666"/><stop offset="0.3000" stop-color="#8c8c8c"/><stop offset="0.4000" stop-color="#737373"/><stop offset="0.5000" stop-color="#525252"/><stop offset="0.6000" stop-color="#333333"/><stop offset="0.7000" stop-color="#616161"/><stop offset="0.8200" stop-color="#8c8c8c"/><stop offset="0.9200" stop-color="#737373"/><stop offset="1.0000" stop-color="#595959"/></linearGradient><linearGradient id="L5" gradientUnits="userSpaceOnUse" x1="901" y1="0" x2="1009" y2="0" spreadMethod="pad"><stop offset="0.0000" stop-color="#333333"/><stop offset="0.0278" stop-color="#424242"/><stop offset="0.0556" stop-color="#575757"/><stop offset="0.0926" stop-color="#6b6b6b"/><stop offset="0.1296" stop-color="#808080"/><stop offset="0.1667" stop-color="#949494"/><stop offset="0.1944" stop-color="#a8a8a8"/><stop offset="0.2222" stop-color="#cccccc"/><stop offset="0.2407" stop-color="#e0e0e0"/><stop offset="0.5000" stop-color="#e6e6e6"/><stop offset="0.7593" stop-color="#e0e0e0"/><stop offset="0.7778" stop-color="#cccccc"/><stop offset="0.8056" stop-color="#a8a8a8"/><stop offset="0.8333" stop-color="#949494"/><stop offset="0.8704" stop-color="#808080"/><stop offset="0.9074" stop-color="#6b6b6b"/><stop offset="0.9444" stop-color="#575757"/><stop offset="0.9722" stop-color="#424242"/><stop offset="1.0000" stop-color="#333333"/></linearGradient><linearGradient id="MG7" gradientUnits="userSpaceOnUse" x1="0" y1="328" x2="0" y2="502"><stop offset="0.000" stop-color="#ffffff"/><stop offset="0.150" stop-color="#ffffff"/><stop offset="0.300" stop-color="#808080"/><stop offset="0.380" stop-color="#000000"/><stop offset="0.620" stop-color="#000000"/><stop offset="0.700" stop-color="#808080"/><stop offset="0.850" stop-color="#ffffff"/><stop offset="1.000" stop-color="#ffffff"/></linearGradient><mask id="M6" maskUnits="userSpaceOnUse" x="0" y="0" width="1920" height="1080"><rect x="0" y="0" width="1920" height="1080" fill="url(#MG7)"/></mask><linearGradient id="L8" gradientUnits="userSpaceOnUse" x1="901" y1="0" x2="1009" y2="0" spreadMethod="pad"><stop offset="0.0000" stop-color="#2e2e2e"/><stop offset="0.0370" stop-color="#383838"/><stop offset="0.0741" stop-color="#474747"/><stop offset="0.1204" stop-color="#5c5c5c"/><stop offset="0.1667" stop-color="#737373"/><stop offset="0.2130" stop-color="#808080"/><stop offset="0.2407" stop-color="#8c8c8c"/><stop offset="0.5000" stop-color="#8c8c8c"/><stop offset="0.7593" stop-color="#8c8c8c"/><stop offset="0.7870" stop-color="#808080"/><stop offset="0.8333" stop-color="#737373"/><stop offset="0.8796" stop-color="#5c5c5c"/><stop offset="0.9259" stop-color="#474747"/><stop offset="0.9630" stop-color="#383838"/><stop offset="1.0000" stop-color="#2e2e2e"/></linearGradient><filter id="cmb10" color-interpolation-filters="sRGB" filterUnits="userSpaceOnUse" x="0" y="0" width="1920" height="1080"><feGaussianBlur stdDeviation="10"/><feComponentTransfer><feFuncR type="table" tableValues="0.000 0.055 0.031 0.039 0.086 0.157 0.196 0.549 0.902 1.000 1.000 1.000 1.000 1.000 1.000 1.000 1.000"/><feFuncG type="table" tableValues="0.000 0.204 0.345 0.439 0.502 0.314 0.157 0.039 0.000 0.000 0.063 0.353 0.647 0.804 0.910 0.961 1.000"/><feFuncB type="table" tableValues="0.000 0.227 0.408 0.588 0.769 0.922 0.941 0.980 1.000 0.745 0.314 0.196 0.251 0.353 0.565 0.784 0.961"/></feComponentTransfer></filter><clipPath id="C9"><path d="M1166 391 L1243 357 L1279 371 L1350 316 C1356 309 1372 308 1386 320 C1398 335 1401 355 1400 380 L1397 407 L1392 409 L1474 427 L1443 483 L1343 478 L1318 496 L1314 510 C1312 522 1300 529 1288 529 L1203 500 C1180 490 1165 478 1160 465 C1155 452 1158 442 1163 438 L1197 421Z"/></clipPath><filter id="bl3" x="-50%" y="-50%" width="200%" height="200%"><feGaussianBlur stdDeviation="3.5"/></filter><radialGradient id="R10" gradientUnits="userSpaceOnUse" cx="1725" cy="395" r="56" gradientTransform="translate(1725 395) rotate(0) scale(2.1 1) translate(-1725 -395)"><stop offset="0.0000" stop-color="#ffffff"/><stop offset="0.2143" stop-color="#f2f2f2"/><stop offset="0.3036" stop-color="#d9d9d9"/><stop offset="0.3929" stop-color="#b8b8b8"/><stop offset="0.4643" stop-color="#9e9e9e"/><stop offset="0.5357" stop-color="#858585"/><stop offset="0.6071" stop-color="#616161"/><stop offset="0.6786" stop-color="#3d3d3d"/><stop offset="0.7500" stop-color="#1f1f1f"/><stop offset="0.8214" stop-color="#383838"/><stop offset="0.8750" stop-color="#616161"/><stop offset="0.9286" stop-color="#858585"/><stop offset="0.9821" stop-color="#9e9e9e"/><stop offset="1.0000" stop-color="#b2b2b2"/></radialGradient><radialGradient id="R11" gradientUnits="userSpaceOnUse" cx="1725" cy="435" r="56" gradientTransform="translate(1725 435) rotate(0) scale(2.1 1) translate(-1725 -435)"><stop offset="0.0000" stop-color="#ffffff"/><stop offset="0.2143" stop-color="#f2f2f2"/><stop offset="0.3036" stop-color="#d9d9d9"/><stop offset="0.3929" stop-color="#b8b8b8"/><stop offset="0.4643" stop-color="#9e9e9e"/><stop offset="0.5357" stop-color="#858585"/><stop offset="0.6071" stop-color="#616161"/><stop offset="0.6786" stop-color="#3d3d3d"/><stop offset="0.7500" stop-color="#1f1f1f"/><stop offset="0.8214" stop-color="#383838"/><stop offset="0.8750" stop-color="#616161"/><stop offset="0.9286" stop-color="#858585"/><stop offset="0.9821" stop-color="#9e9e9e"/><stop offset="1.0000" stop-color="#b2b2b2"/></radialGradient><radialGradient id="R12" gradientUnits="userSpaceOnUse" cx="1725" cy="415" r="98" gradientTransform="translate(1725 415) rotate(0) scale(1 1.7) translate(-1725 -415)"><stop offset="0.0000" stop-color="#e6e6e6"/><stop offset="0.3265" stop-color="#9e9e9e"/><stop offset="0.3571" stop-color="#8c8c8c"/><stop offset="0.4082" stop-color="#616161"/><stop offset="0.4490" stop-color="#383838"/><stop offset="0.4898" stop-color="#1f1f1f"/><stop offset="0.5408" stop-color="#000000"/><stop offset="0.5816" stop-color="#1f1f1f"/><stop offset="0.6327" stop-color="#333333"/><stop offset="0.6939" stop-color="#595959"/><stop offset="0.7449" stop-color="#808080"/><stop offset="0.7959" stop-color="#999999"/><stop offset="0.8469" stop-color="#b2b2b2"/><stop offset="0.8980" stop-color="#cccccc"/><stop offset="0.9490" stop-color="#ebebeb"/><stop offset="1.0000" stop-color="#ffffff"/></radialGradient><linearGradient id="wl4" gradientUnits="userSpaceOnUse" x1="1561" y1="0" x2="1889" y2="0"><stop offset="0" stop-color="#ff6020"/><stop offset="0.12" stop-color="#ff00c0"/><stop offset="0.88" stop-color="#ff00c0"/><stop offset="1" stop-color="#ff6020"/></linearGradient><linearGradient id="L13" gradientUnits="userSpaceOnUse" x1="0" y1="699" x2="0" y2="960" spreadMethod="pad"><stop offset="0.0000" stop-color="#292929"/><stop offset="0.5000" stop-color="#333333"/><stop offset="1.0000" stop-color="#4c4c4c"/></linearGradient><radialGradient id="R14" gradientUnits="userSpaceOnUse" cx="569" cy="975" r="722.4" gradientTransform="translate(569 975) rotate(0) scale(0.22093023255813954 1) translate(-569 -975)"><stop offset="0.0000" stop-color="#ffffff"/><stop offset="0.0417" stop-color="#f6f6f6"/><stop offset="0.0833" stop-color="#ededed"/><stop offset="0.1250" stop-color="#e2e2e2"/><stop offset="0.1667" stop-color="#c7c7c7"/><stop offset="0.2083" stop-color="#b0b0b0"/><stop offset="0.2500" stop-color="#9c9c9c"/><stop offset="0.2917" stop-color="#8a8a8a"/><stop offset="0.3333" stop-color="#787878"/><stop offset="0.3750" stop-color="#666666"/><stop offset="0.4167" stop-color="#555555"/><stop offset="0.4583" stop-color="#484848"/><stop offset="0.5000" stop-color="#3f3f3f"/><stop offset="0.5417" stop-color="#3a3a3a"/><stop offset="0.5833" stop-color="#353535"/><stop offset="0.6250" stop-color="#303030"/><stop offset="0.6667" stop-color="#2b2b2b"/><stop offset="0.7083" stop-color="#272727"/><stop offset="0.7500" stop-color="#222222"/><stop offset="0.7917" stop-color="#1d1d1d"/><stop offset="0.8333" stop-color="#171717"/><stop offset="0.8750" stop-color="#121212"/><stop offset="0.9167" stop-color="#0c0c0c"/><stop offset="0.9583" stop-color="#060606"/><stop offset="1.0000" stop-color="#000000"/></radialGradient><radialGradient id="R15" gradientUnits="userSpaceOnUse" cx="569" cy="690" r="369.0" gradientTransform="translate(569 690) rotate(0) scale(0.3333333333333333 1) translate(-569 -690)"><stop offset="0.0000" stop-color="#949494"/><stop offset="0.0417" stop-color="#878787"/><stop offset="0.0833" stop-color="#7a7a7a"/><stop offset="0.1250" stop-color="#6d6d6d"/><stop offset="0.1667" stop-color="#606060"/><stop offset="0.2083" stop-color="#545454"/><stop offset="0.2500" stop-color="#4a4a4a"/><stop offset="0.2917" stop-color="#424242"/><stop offset="0.3333" stop-color="#3e3e3e"/><stop offset="0.3750" stop-color="#3a3a3a"/><stop offset="0.4167" stop-color="#363636"/><stop offset="0.4583" stop-color="#323232"/><stop offset="0.5000" stop-color="#2f2f2f"/><stop offset="0.5417" stop-color="#2c2c2c"/><stop offset="0.5833" stop-color="#282828"/><stop offset="0.6250" stop-color="#252525"/><stop offset="0.6667" stop-color="#212121"/><stop offset="0.7083" stop-color="#1d1d1d"/><stop offset="0.7500" stop-color="#191919"/><stop offset="0.7917" stop-color="#161616"/><stop offset="0.8333" stop-color="#111111"/><stop offset="0.8750" stop-color="#0d0d0d"/><stop offset="0.9167" stop-color="#090909"/><stop offset="0.9583" stop-color="#040404"/><stop offset="1.0000" stop-color="#000000"/></radialGradient><radialGradient id="R16" gradientUnits="userSpaceOnUse" cx="466" cy="990" r="630.0" gradientTransform="translate(466 990) rotate(0) scale(0.17333333333333334 1) translate(-466 -990)"><stop offset="0.0000" stop-color="#ffffff"/><stop offset="0.0417" stop-color="#f6f6f6"/><stop offset="0.0833" stop-color="#ededed"/><stop offset="0.1250" stop-color="#e2e2e2"/><stop offset="0.1667" stop-color="#c7c7c7"/><stop offset="0.2083" stop-color="#b0b0b0"/><stop offset="0.2500" stop-color="#9c9c9c"/><stop offset="0.2917" stop-color="#8a8a8a"/><stop offset="0.3333" stop-color="#787878"/><stop offset="0.3750" stop-color="#666666"/><stop offset="0.4167" stop-color="#555555"/><stop offset="0.4583" stop-color="#484848"/><stop offset="0.5000" stop-color="#3f3f3f"/><stop offset="0.5417" stop-color="#3a3a3a"/><stop offset="0.5833" stop-color="#353535"/><stop offset="0.6250" stop-color="#303030"/><stop offset="0.6667" stop-color="#2b2b2b"/><stop offset="0.7083" stop-color="#272727"/><stop offset="0.7500" stop-color="#222222"/><stop offset="0.7917" stop-color="#1d1d1d"/><stop offset="0.8333" stop-color="#171717"/><stop offset="0.8750" stop-color="#121212"/><stop offset="0.9167" stop-color="#0c0c0c"/><stop offset="0.9583" stop-color="#060606"/><stop offset="1.0000" stop-color="#000000"/></radialGradient><radialGradient id="R17" gradientUnits="userSpaceOnUse" cx="674" cy="990" r="630.0" gradientTransform="translate(674 990) rotate(0) scale(0.17333333333333334 1) translate(-674 -990)"><stop offset="0.0000" stop-color="#ffffff"/><stop offset="0.0417" stop-color="#f6f6f6"/><stop offset="0.0833" stop-color="#ededed"/><stop offset="0.1250" stop-color="#e2e2e2"/><stop offset="0.1667" stop-color="#c7c7c7"/><stop offset="0.2083" stop-color="#b0b0b0"/><stop offset="0.2500" stop-color="#9c9c9c"/><stop offset="0.2917" stop-color="#8a8a8a"/><stop offset="0.3333" stop-color="#787878"/><stop offset="0.3750" stop-color="#666666"/><stop offset="0.4167" stop-color="#555555"/><stop offset="0.4583" stop-color="#484848"/><stop offset="0.5000" stop-color="#3f3f3f"/><stop offset="0.5417" stop-color="#3a3a3a"/><stop offset="0.5833" stop-color="#353535"/><stop offset="0.6250" stop-color="#303030"/><stop offset="0.6667" stop-color="#2b2b2b"/><stop offset="0.7083" stop-color="#272727"/><stop offset="0.7500" stop-color="#222222"/><stop offset="0.7917" stop-color="#1d1d1d"/><stop offset="0.8333" stop-color="#171717"/><stop offset="0.8750" stop-color="#121212"/><stop offset="0.9167" stop-color="#0c0c0c"/><stop offset="0.9583" stop-color="#060606"/><stop offset="1.0000" stop-color="#000000"/></radialGradient><radialGradient id="R18" gradientUnits="userSpaceOnUse" cx="488" cy="699" r="270.0" gradientTransform="translate(488 699) rotate(0) scale(0.15555555555555556 1) translate(-488 -699)"><stop offset="0.0000" stop-color="#8c8c8c"/><stop offset="0.0417" stop-color="#808080"/><stop offset="0.0833" stop-color="#737373"/><stop offset="0.1250" stop-color="#666666"/><stop offset="0.1667" stop-color="#595959"/><stop offset="0.2083" stop-color="#505050"/><stop offset="0.2500" stop-color="#464646"/><stop offset="0.2917" stop-color="#404040"/><stop offset="0.3333" stop-color="#3c3c3c"/><stop offset="0.3750" stop-color="#383838"/><stop offset="0.4167" stop-color="#353535"/><stop offset="0.4583" stop-color="#313131"/><stop offset="0.5000" stop-color="#2e2e2e"/><stop offset="0.5417" stop-color="#2b2b2b"/><stop offset="0.5833" stop-color="#282828"/><stop offset="0.6250" stop-color="#242424"/><stop offset="0.6667" stop-color="#202020"/><stop offset="0.7083" stop-color="#1d1d1d"/><stop offset="0.7500" stop-color="#191919"/><stop offset="0.7917" stop-color="#151515"/><stop offset="0.8333" stop-color="#111111"/><stop offset="0.8750" stop-color="#0d0d0d"/><stop offset="0.9167" stop-color="#080808"/><stop offset="0.9583" stop-color="#040404"/><stop offset="1.0000" stop-color="#000000"/></radialGradient><radialGradient id="R19" gradientUnits="userSpaceOnUse" cx="652" cy="699" r="270.0" gradientTransform="translate(652 699) rotate(0) scale(0.15555555555555556 1) translate(-652 -699)"><stop offset="0.0000" stop-color="#8c8c8c"/><stop offset="0.0417" stop-color="#808080"/><stop offset="0.0833" stop-color="#737373"/><stop offset="0.1250" stop-color="#666666"/><stop offset="0.1667" stop-color="#595959"/><stop offset="0.2083" stop-color="#505050"/><stop offset="0.2500" stop-color="#464646"/><stop offset="0.2917" stop-color="#404040"/><stop offset="0.3333" stop-color="#3c3c3c"/><stop offset="0.3750" stop-color="#383838"/><stop offset="0.4167" stop-color="#353535"/><stop offset="0.4583" stop-color="#313131"/><stop offset="0.5000" stop-color="#2e2e2e"/><stop offset="0.5417" stop-color="#2b2b2b"/><stop offset="0.5833" stop-color="#282828"/><stop offset="0.6250" stop-color="#242424"/><stop offset="0.6667" stop-color="#202020"/><stop offset="0.7083" stop-color="#1d1d1d"/><stop offset="0.7500" stop-color="#191919"/><stop offset="0.7917" stop-color="#151515"/><stop offset="0.8333" stop-color="#111111"/><stop offset="0.8750" stop-color="#0d0d0d"/><stop offset="0.9167" stop-color="#080808"/><stop offset="0.9583" stop-color="#040404"/><stop offset="1.0000" stop-color="#000000"/></radialGradient><linearGradient id="L20" gradientUnits="userSpaceOnUse" x1="0" y1="780" x2="0" y2="910" spreadMethod="pad"><stop offset="0.0000" stop-color="#8f8f8f"/><stop offset="0.1500" stop-color="#9e9e9e"/><stop offset="0.4500" stop-color="#b2b2b2"/><stop offset="0.8000" stop-color="#cccccc"/><stop offset="1.0000" stop-color="#d1d1d1"/></linearGradient><linearGradient id="L21" gradientUnits="userSpaceOnUse" x1="0" y1="780" x2="0" y2="910" spreadMethod="pad"><stop offset="0.0000" stop-color="#8f8f8f"/><stop offset="0.1500" stop-color="#9e9e9e"/><stop offset="0.4500" stop-color="#b2b2b2"/><stop offset="0.8000" stop-color="#cccccc"/><stop offset="1.0000" stop-color="#d1d1d1"/></linearGradient><linearGradient id="L22" gradientUnits="userSpaceOnUse" x1="907" y1="0" x2="1001" y2="0" spreadMethod="pad"><stop offset="0.0000" stop-color="#595959"/><stop offset="0.0851" stop-color="#383838"/><stop offset="0.1702" stop-color="#4c4c4c"/><stop offset="0.2766" stop-color="#6b6b6b"/><stop offset="0.3830" stop-color="#858585"/><stop offset="0.5000" stop-color="#8f8f8f"/><stop offset="0.6170" stop-color="#858585"/><stop offset="0.7234" stop-color="#6b6b6b"/><stop offset="0.8298" stop-color="#4c4c4c"/><stop offset="0.9149" stop-color="#383838"/><stop offset="1.0000" stop-color="#595959"/></linearGradient><linearGradient id="MG24" gradientUnits="userSpaceOnUse" x1="0" y1="696" x2="0" y2="962"><stop offset="0.000" stop-color="#000000"/><stop offset="0.220" stop-color="#1a1a1a"/><stop offset="0.450" stop-color="#8c8c8c"/><stop offset="0.700" stop-color="#e0e0e0"/><stop offset="1.000" stop-color="#ffffff"/></linearGradient><mask id="M23" maskUnits="userSpaceOnUse" x="0" y="0" width="1920" height="1080"><rect x="0" y="0" width="1920" height="1080" fill="url(#MG24)"/></mask><linearGradient id="L25" gradientUnits="userSpaceOnUse" x1="919" y1="0" x2="989" y2="0" spreadMethod="pad"><stop offset="0.0000" stop-color="#8c8c8c"/><stop offset="0.0714" stop-color="#a1a1a1"/><stop offset="0.1429" stop-color="#b8b8b8"/><stop offset="0.2429" stop-color="#d1d1d1"/><stop offset="0.3571" stop-color="#ebebeb"/><stop offset="0.5000" stop-color="#f7f7f7"/><stop offset="0.6429" stop-color="#ebebeb"/><stop offset="0.7571" stop-color="#d1d1d1"/><stop offset="0.8571" stop-color="#b8b8b8"/><stop offset="0.9286" stop-color="#a1a1a1"/><stop offset="1.0000" stop-color="#8c8c8c"/></linearGradient><radialGradient id="R26" gradientUnits="userSpaceOnUse" cx="1340" cy="700" r="231.0" gradientTransform="translate(1340 700) rotate(0) scale(0.6545454545454545 1) translate(-1340 -700)"><stop offset="0.0000" stop-color="#ffffff"/><stop offset="0.0417" stop-color="#f6f6f6"/><stop offset="0.0833" stop-color="#ededed"/><stop offset="0.1250" stop-color="#e2e2e2"/><stop offset="0.1667" stop-color="#c7c7c7"/><stop offset="0.2083" stop-color="#b0b0b0"/><stop offset="0.2500" stop-color="#9c9c9c"/><stop offset="0.2917" stop-color="#8a8a8a"/><stop offset="0.3333" stop-color="#787878"/><stop offset="0.3750" stop-color="#666666"/><stop offset="0.4167" stop-color="#555555"/><stop offset="0.4583" stop-color="#484848"/><stop offset="0.5000" stop-color="#3f3f3f"/><stop offset="0.5417" stop-color="#3a3a3a"/><stop offset="0.5833" stop-color="#353535"/><stop offset="0.6250" stop-color="#303030"/><stop offset="0.6667" stop-color="#2b2b2b"/><stop offset="0.7083" stop-color="#272727"/><stop offset="0.7500" stop-color="#222222"/><stop offset="0.7917" stop-color="#1d1d1d"/><stop offset="0.8333" stop-color="#171717"/><stop offset="0.8750" stop-color="#121212"/><stop offset="0.9167" stop-color="#0c0c0c"/><stop offset="0.9583" stop-color="#060606"/><stop offset="1.0000" stop-color="#000000"/></radialGradient><radialGradient id="R27" gradientUnits="userSpaceOnUse" cx="1340" cy="955" r="123.45" gradientTransform="translate(1340 955) rotate(0) scale(1.6666666666666667 1) translate(-1340 -955)"><stop offset="0.0000" stop-color="#bdbdbd"/><stop offset="0.0417" stop-color="#ababab"/><stop offset="0.0833" stop-color="#9b9b9b"/><stop offset="0.1250" stop-color="#8c8c8c"/><stop offset="0.1667" stop-color="#7e7e7e"/><stop offset="0.2083" stop-color="#6f6f6f"/><stop offset="0.2500" stop-color="#616161"/><stop offset="0.2917" stop-color="#545454"/><stop offset="0.3333" stop-color="#494949"/><stop offset="0.3750" stop-color="#414141"/><stop offset="0.4167" stop-color="#3c3c3c"/><stop offset="0.4583" stop-color="#383838"/><stop offset="0.5000" stop-color="#333333"/><stop offset="0.5417" stop-color="#303030"/><stop offset="0.5833" stop-color="#2c2c2c"/><stop offset="0.6250" stop-color="#282828"/><stop offset="0.6667" stop-color="#252525"/><stop offset="0.7083" stop-color="#202020"/><stop offset="0.7500" stop-color="#1c1c1c"/><stop offset="0.7917" stop-color="#181818"/><stop offset="0.8333" stop-color="#131313"/><stop offset="0.8750" stop-color="#0f0f0f"/><stop offset="0.9167" stop-color="#0a0a0a"/><stop offset="0.9583" stop-color="#050505"/><stop offset="1.0000" stop-color="#000000"/></radialGradient><radialGradient id="R28" gradientUnits="userSpaceOnUse" cx="1252" cy="952" r="164.6" gradientTransform="translate(1252 952) rotate(0) scale(0.4166666666666667 1) translate(-1252 -952)"><stop offset="0.0000" stop-color="#bdbdbd"/><stop offset="0.0417" stop-color="#ababab"/><stop offset="0.0833" stop-color="#9b9b9b"/><stop offset="0.1250" stop-color="#8c8c8c"/><stop offset="0.1667" stop-color="#7e7e7e"/><stop offset="0.2083" stop-color="#6f6f6f"/><stop offset="0.2500" stop-color="#616161"/><stop offset="0.2917" stop-color="#545454"/><stop offset="0.3333" stop-color="#494949"/><stop offset="0.3750" stop-color="#414141"/><stop offset="0.4167" stop-color="#3c3c3c"/><stop offset="0.4583" stop-color="#383838"/><stop offset="0.5000" stop-color="#333333"/><stop offset="0.5417" stop-color="#303030"/><stop offset="0.5833" stop-color="#2c2c2c"/><stop offset="0.6250" stop-color="#282828"/><stop offset="0.6667" stop-color="#252525"/><stop offset="0.7083" stop-color="#202020"/><stop offset="0.7500" stop-color="#1c1c1c"/><stop offset="0.7917" stop-color="#181818"/><stop offset="0.8333" stop-color="#131313"/><stop offset="0.8750" stop-color="#0f0f0f"/><stop offset="0.9167" stop-color="#0a0a0a"/><stop offset="0.9583" stop-color="#050505"/><stop offset="1.0000" stop-color="#000000"/></radialGradient><radialGradient id="R29" gradientUnits="userSpaceOnUse" cx="1426" cy="952" r="164.6" gradientTransform="translate(1426 952) rotate(0) scale(0.4166666666666667 1) translate(-1426 -952)"><stop offset="0.0000" stop-color="#bdbdbd"/><stop offset="0.0417" stop-color="#ababab"/><stop offset="0.0833" stop-color="#9b9b9b"/><stop offset="0.1250" stop-color="#8c8c8c"/><stop offset="0.1667" stop-color="#7e7e7e"/><stop offset="0.2083" stop-color="#6f6f6f"/><stop offset="0.2500" stop-color="#616161"/><stop offset="0.2917" stop-color="#545454"/><stop offset="0.3333" stop-color="#494949"/><stop offset="0.3750" stop-color="#414141"/><stop offset="0.4167" stop-color="#3c3c3c"/><stop offset="0.4583" stop-color="#383838"/><stop offset="0.5000" stop-color="#333333"/><stop offset="0.5417" stop-color="#303030"/><stop offset="0.5833" stop-color="#2c2c2c"/><stop offset="0.6250" stop-color="#282828"/><stop offset="0.6667" stop-color="#252525"/><stop offset="0.7083" stop-color="#202020"/><stop offset="0.7500" stop-color="#1c1c1c"/><stop offset="0.7917" stop-color="#181818"/><stop offset="0.8333" stop-color="#131313"/><stop offset="0.8750" stop-color="#0f0f0f"/><stop offset="0.9167" stop-color="#0a0a0a"/><stop offset="0.9583" stop-color="#050505"/><stop offset="1.0000" stop-color="#000000"/></radialGradient><radialGradient id="R30" gradientUnits="userSpaceOnUse" cx="1300" cy="700" r="120.0" gradientTransform="translate(1300 700) rotate(0) scale(0.25 1) translate(-1300 -700)"><stop offset="0.0000" stop-color="#8c8c8c"/><stop offset="0.0417" stop-color="#808080"/><stop offset="0.0833" stop-color="#737373"/><stop offset="0.1250" stop-color="#666666"/><stop offset="0.1667" stop-color="#595959"/><stop offset="0.2083" stop-color="#505050"/><stop offset="0.2500" stop-color="#464646"/><stop offset="0.2917" stop-color="#404040"/><stop offset="0.3333" stop-color="#3c3c3c"/><stop offset="0.3750" stop-color="#383838"/><stop offset="0.4167" stop-color="#353535"/><stop offset="0.4583" stop-color="#313131"/><stop offset="0.5000" stop-color="#2e2e2e"/><stop offset="0.5417" stop-color="#2b2b2b"/><stop offset="0.5833" stop-color="#282828"/><stop offset="0.6250" stop-color="#242424"/><stop offset="0.6667" stop-color="#202020"/><stop offset="0.7083" stop-color="#1d1d1d"/><stop offset="0.7500" stop-color="#191919"/><stop offset="0.7917" stop-color="#151515"/><stop offset="0.8333" stop-color="#111111"/><stop offset="0.8750" stop-color="#0d0d0d"/><stop offset="0.9167" stop-color="#080808"/><stop offset="0.9583" stop-color="#040404"/><stop offset="1.0000" stop-color="#000000"/></radialGradient><radialGradient id="R31" gradientUnits="userSpaceOnUse" cx="1380" cy="700" r="120.0" gradientTransform="translate(1380 700) rotate(0) scale(0.25 1) translate(-1380 -700)"><stop offset="0.0000" stop-color="#8c8c8c"/><stop offset="0.0417" stop-color="#808080"/><stop offset="0.0833" stop-color="#737373"/><stop offset="0.1250" stop-color="#666666"/><stop offset="0.1667" stop-color="#595959"/><stop offset="0.2083" stop-color="#505050"/><stop offset="0.2500" stop-color="#464646"/><stop offset="0.2917" stop-color="#404040"/><stop offset="0.3333" stop-color="#3c3c3c"/><stop offset="0.3750" stop-color="#383838"/><stop offset="0.4167" stop-color="#353535"/><stop offset="0.4583" stop-color="#313131"/><stop offset="0.5000" stop-color="#2e2e2e"/><stop offset="0.5417" stop-color="#2b2b2b"/><stop offset="0.5833" stop-color="#282828"/><stop offset="0.6250" stop-color="#242424"/><stop offset="0.6667" stop-color="#202020"/><stop offset="0.7083" stop-color="#1d1d1d"/><stop offset="0.7500" stop-color="#191919"/><stop offset="0.7917" stop-color="#151515"/><stop offset="0.8333" stop-color="#111111"/><stop offset="0.8750" stop-color="#0d0d0d"/><stop offset="0.9167" stop-color="#080808"/><stop offset="0.9583" stop-color="#040404"/><stop offset="1.0000" stop-color="#000000"/></radialGradient><radialGradient id="R32" gradientUnits="userSpaceOnUse" cx="1340" cy="848" r="90" gradientTransform="translate(1340 848) rotate(0) scale(1 0.42) translate(-1340 -848)"><stop offset="0.0000" stop-color="#000000"/><stop offset="0.3333" stop-color="#0a0a0a"/><stop offset="0.6111" stop-color="#1a1a1a"/><stop offset="0.8333" stop-color="#292929"/><stop offset="0.9556" stop-color="#4c4c4c"/><stop offset="1.0000" stop-color="#ffffff"/></radialGradient><radialGradient id="R33" gradientUnits="userSpaceOnUse" cx="1725" cy="700" r="235.20000000000002" gradientTransform="translate(1725 700) rotate(0) scale(0.6428571428571429 1) translate(-1725 -700)"><stop offset="0.0000" stop-color="#ffffff"/><stop offset="0.0417" stop-color="#f6f6f6"/><stop offset="0.0833" stop-color="#ededed"/><stop offset="0.1250" stop-color="#e2e2e2"/><stop offset="0.1667" stop-color="#c7c7c7"/><stop offset="0.2083" stop-color="#b0b0b0"/><stop offset="0.2500" stop-color="#9c9c9c"/><stop offset="0.2917" stop-color="#8a8a8a"/><stop offset="0.3333" stop-color="#787878"/><stop offset="0.3750" stop-color="#666666"/><stop offset="0.4167" stop-color="#555555"/><stop offset="0.4583" stop-color="#484848"/><stop offset="0.5000" stop-color="#3f3f3f"/><stop offset="0.5417" stop-color="#3a3a3a"/><stop offset="0.5833" stop-color="#353535"/><stop offset="0.6250" stop-color="#303030"/><stop offset="0.6667" stop-color="#2b2b2b"/><stop offset="0.7083" stop-color="#272727"/><stop offset="0.7500" stop-color="#222222"/><stop offset="0.7917" stop-color="#1d1d1d"/><stop offset="0.8333" stop-color="#171717"/><stop offset="0.8750" stop-color="#121212"/><stop offset="0.9167" stop-color="#0c0c0c"/><stop offset="0.9583" stop-color="#060606"/><stop offset="1.0000" stop-color="#000000"/></radialGradient><radialGradient id="R34" gradientUnits="userSpaceOnUse" cx="1633" cy="700" r="369.6" gradientTransform="translate(1633 700) rotate(0) scale(0.22727272727272727 1) translate(-1633 -700)"><stop offset="0.0000" stop-color="#ffffff"/><stop offset="0.0417" stop-color="#f6f6f6"/><stop offset="0.0833" stop-color="#ededed"/><stop offset="0.1250" stop-color="#e2e2e2"/><stop offset="0.1667" stop-color="#c7c7c7"/><stop offset="0.2083" stop-color="#b0b0b0"/><stop offset="0.2500" stop-color="#9c9c9c"/><stop offset="0.2917" stop-color="#8a8a8a"/><stop offset="0.3333" stop-color="#787878"/><stop offset="0.3750" stop-color="#666666"/><stop offset="0.4167" stop-color="#555555"/><stop offset="0.4583" stop-color="#484848"/><stop offset="0.5000" stop-color="#3f3f3f"/><stop offset="0.5417" stop-color="#3a3a3a"/><stop offset="0.5833" stop-color="#353535"/><stop offset="0.6250" stop-color="#303030"/><stop offset="0.6667" stop-color="#2b2b2b"/><stop offset="0.7083" stop-color="#272727"/><stop offset="0.7500" stop-color="#222222"/><stop offset="0.7917" stop-color="#1d1d1d"/><stop offset="0.8333" stop-color="#171717"/><stop offset="0.8750" stop-color="#121212"/><stop offset="0.9167" stop-color="#0c0c0c"/><stop offset="0.9583" stop-color="#060606"/><stop offset="1.0000" stop-color="#000000"/></radialGradient><radialGradient id="R35" gradientUnits="userSpaceOnUse" cx="1821" cy="700" r="369.6" gradientTransform="translate(1821 700) rotate(0) scale(0.22727272727272727 1) translate(-1821 -700)"><stop offset="0.0000" stop-color="#ffffff"/><stop offset="0.0417" stop-color="#f6f6f6"/><stop offset="0.0833" stop-color="#ededed"/><stop offset="0.1250" stop-color="#e2e2e2"/><stop offset="0.1667" stop-color="#c7c7c7"/><stop offset="0.2083" stop-color="#b0b0b0"/><stop offset="0.2500" stop-color="#9c9c9c"/><stop offset="0.2917" stop-color="#8a8a8a"/><stop offset="0.3333" stop-color="#787878"/><stop offset="0.3750" stop-color="#666666"/><stop offset="0.4167" stop-color="#555555"/><stop offset="0.4583" stop-color="#484848"/><stop offset="0.5000" stop-color="#3f3f3f"/><stop offset="0.5417" stop-color="#3a3a3a"/><stop offset="0.5833" stop-color="#353535"/><stop offset="0.6250" stop-color="#303030"/><stop offset="0.6667" stop-color="#2b2b2b"/><stop offset="0.7083" stop-color="#272727"/><stop offset="0.7500" stop-color="#222222"/><stop offset="0.7917" stop-color="#1d1d1d"/><stop offset="0.8333" stop-color="#171717"/><stop offset="0.8750" stop-color="#121212"/><stop offset="0.9167" stop-color="#0c0c0c"/><stop offset="0.9583" stop-color="#060606"/><stop offset="1.0000" stop-color="#000000"/></radialGradient><radialGradient id="R36" gradientUnits="userSpaceOnUse" cx="1727" cy="960" r="148.4"><stop offset="0.0000" stop-color="#cccccc"/><stop offset="0.0417" stop-color="#b7b7b7"/><stop offset="0.0833" stop-color="#a5a5a5"/><stop offset="0.1250" stop-color="#969696"/><stop offset="0.1667" stop-color="#878787"/><stop offset="0.2083" stop-color="#787878"/><stop offset="0.2500" stop-color="#696969"/><stop offset="0.2917" stop-color="#5a5a5a"/><stop offset="0.3333" stop-color="#4e4e4e"/><stop offset="0.3750" stop-color="#434343"/><stop offset="0.4167" stop-color="#3e3e3e"/><stop offset="0.4583" stop-color="#3a3a3a"/><stop offset="0.5000" stop-color="#353535"/><stop offset="0.5417" stop-color="#313131"/><stop offset="0.5833" stop-color="#2d2d2d"/><stop offset="0.6250" stop-color="#292929"/><stop offset="0.6667" stop-color="#262626"/><stop offset="0.7083" stop-color="#212121"/><stop offset="0.7500" stop-color="#1d1d1d"/><stop offset="0.7917" stop-color="#181818"/><stop offset="0.8333" stop-color="#141414"/><stop offset="0.8750" stop-color="#0f0f0f"/><stop offset="0.9167" stop-color="#0a0a0a"/><stop offset="0.9583" stop-color="#050505"/><stop offset="1.0000" stop-color="#000000"/></radialGradient><radialGradient id="R37" gradientUnits="userSpaceOnUse" cx="1668" cy="848" r="60"><stop offset="0.0000" stop-color="#000000"/><stop offset="0.1333" stop-color="#0a0a0a"/><stop offset="0.3667" stop-color="#1f1f1f"/><stop offset="0.6667" stop-color="#2e2e2e"/><stop offset="0.8667" stop-color="#4c4c4c"/><stop offset="1.0000" stop-color="#ffffff"/></radialGradient><radialGradient id="R38" gradientUnits="userSpaceOnUse" cx="1783" cy="848" r="60"><stop offset="0.0000" stop-color="#000000"/><stop offset="0.1333" stop-color="#0a0a0a"/><stop offset="0.3667" stop-color="#1f1f1f"/><stop offset="0.6667" stop-color="#2e2e2e"/><stop offset="0.8667" stop-color="#4c4c4c"/><stop offset="1.0000" stop-color="#ffffff"/></radialGradient><radialGradient id="R39" gradientUnits="userSpaceOnUse" cx="1668" cy="848" r="150" gradientTransform="translate(1668 848) rotate(0) scale(1 1.02) translate(-1668 -848)"><stop offset="0.0000" stop-color="#000000"/><stop offset="0.0533" stop-color="#0d0d0d"/><stop offset="0.1333" stop-color="#242424"/><stop offset="0.2000" stop-color="#383838"/><stop offset="0.2800" stop-color="#575757"/><stop offset="0.3667" stop-color="#737373"/><stop offset="0.4533" stop-color="#8c8c8c"/><stop offset="0.5467" stop-color="#a1a1a1"/><stop offset="0.6333" stop-color="#b2b2b2"/><stop offset="0.7333" stop-color="#c7c7c7"/><stop offset="1.0000" stop-color="#ffffff"/></radialGradient><radialGradient id="R40" gradientUnits="userSpaceOnUse" cx="1783" cy="848" r="150" gradientTransform="translate(1783 848) rotate(0) scale(1 1.02) translate(-1783 -848)"><stop offset="0.0000" stop-color="#000000"/><stop offset="0.0533" stop-color="#0d0d0d"/><stop offset="0.1333" stop-color="#242424"/><stop offset="0.2000" stop-color="#383838"/><stop offset="0.2800" stop-color="#575757"/><stop offset="0.3667" stop-color="#737373"/><stop offset="0.4533" stop-color="#8c8c8c"/><stop offset="0.5467" stop-color="#a1a1a1"/><stop offset="0.6333" stop-color="#b2b2b2"/><stop offset="0.7333" stop-color="#c7c7c7"/><stop offset="1.0000" stop-color="#ffffff"/></radialGradient></defs><g filter="url(#cm)" style="isolation:isolate"><path d="M412 389 L489 343 L507 350 L433 405Z" fill="url(#L1)"/></g><g clip-path="url(#C2)"><g filter="url(#cmb13)" style="isolation:isolate"><rect x="380" y="210" width="380" height="410" fill="#666"/><path d="M380 210 L700 210 L700 290 L634 294 L580 328 L520 358 L480 374 L440 392 L380 414Z" fill="#f7f7f7"/><path d="M380 414 L440 392 L480 374 L520 358 L580 328 L634 294 L700 290 L700 335 L641 350 L580 403 L520 445 L470 466 L380 505Z" fill="#737373"/><path d="M450 445 L520 405 L580 368 L645 328" fill="none" stroke="#3d3d3d" stroke-width="10" stroke-linecap="round" stroke-linejoin="round"/><path d="M641 350 L700 335 L700 480 L560 480 L580 403Z" fill="#e6e6e6"/><path d="M380 505 L470 466 L520 445 L550 425 L560 600 L380 600Z" fill="#666666"/><path d="M485 425 L500 432" fill="none" stroke="#292929" stroke-width="16" stroke-linecap="round" stroke-linejoin="round"/><path d="M495 545 L520 520" fill="none" stroke="#292929" stroke-width="16" stroke-linecap="round" stroke-linejoin="round"/><path d="M505 490 L545 468" fill="none" stroke="#8f8f8f" stroke-width="10" stroke-linecap="round" stroke-linejoin="round"/><path d="M380 380 L470 370 L480 392 L440 415 L380 440Z" fill="#858585"/><path d="M610 283 L650 266" fill="none" stroke="#ffffff" stroke-width="16" stroke-linecap="round" stroke-linejoin="round"/><path d="M628 400 L650 390" fill="none" stroke="#ffffff" stroke-width="10" stroke-linecap="round" stroke-linejoin="round"/></g></g><g filter="url(#cm)" style="isolation:isolate"><path d="M617 390 L703 418 L643 478 L539 461 L580 430Z" fill="url(#L3)"/></g><g filter="url(#cm)" style="isolation:isolate"><path d="M441 409 C470 405 500 450 496 505 C494 540 486 552 474 549 C450 546 420 505 419 460 C418 430 428 411 441 409Z" fill="url(#L4)"/></g>
<g filter="url(#cm)" style="isolation:isolate"><path fill-rule="evenodd" d="M901.5 415 C901.5 365 925 328 955 328 C985 328 1008.5 365 1008.5 415 C1008.5 465 985 502 955 502 C925 502 901.5 465 901.5 415Z M927 415 C927 492 940 499 955 499 C970 499 983 492 983 415 C983 338 970 331 955 331 C940 331 927 338 927 415Z" fill="url(#L5)"/><g mask="url(#M6)"><path fill-rule="evenodd" d="M901.5 415 C901.5 365 925 328 955 328 C985 328 1008.5 365 1008.5 415 C1008.5 465 985 502 955 502 C925 502 901.5 465 901.5 415Z M927 415 C927 492 940 499 955 499 C970 499 983 492 983 415 C983 338 970 331 955 331 C940 331 927 338 927 415Z" fill="url(#L8)"/></g></g>
<path fill="none" stroke="#d010ff" stroke-width="1.6" d="M927 415 C927 492 940 499 955 499 C970 499 983 492 983 415 C983 338 970 331 955 331 C940 331 927 338 927 415Z" opacity="0.85"/>
<path d="M810 415 H901 M1009 415 H1100" stroke="#ff10a8" stroke-width="2"/>
<rect x="891" y="407" width="11" height="15" rx="1.5" fill="#ff1068"/><rect x="1008" y="407" width="11" height="15" rx="1.5" fill="#ff1068"/>
<rect x="912.5" y="400" width="7" height="30" fill="#ff1050"/><rect x="919.5" y="400" width="4" height="30" fill="#ff6040"/><rect x="923.5" y="400" width="3.5" height="30" fill="#ffd060"/>
<rect x="983" y="400" width="3.5" height="30" fill="#ffd060"/><rect x="986.5" y="400" width="4" height="30" fill="#ff6040"/><rect x="990.5" y="400" width="7" height="30" fill="#ff1050"/>
<g clip-path="url(#C9)"><g filter="url(#cmb10)" style="isolation:isolate"><rect x="1150" y="210" width="384" height="410" fill="#737373"/><path d="M1285 372 L1340 330 L1392 346 L1404 400 L1418 420 L1412 450 L1385 470 L1335 468 L1300 440 L1270 415 L1228 408 L1250 395Z" fill="#242424"/><path d="M1350 396 L1366 424 L1374 442" fill="none" stroke="#000000" stroke-width="18" stroke-linecap="round" stroke-linejoin="round"/><path d="M1330 280 L1410 280 L1402 314 L1350 320Z" fill="#b2b2b2"/><path d="M1466 395 L1520 420 L1470 510 L1420 500 L1456 432Z" fill="#adadad"/><path d="M1130 375 L1245 335 L1262 356 L1195 398 L1130 420Z" fill="#a3a3a3"/><ellipse cx="1236" cy="444" rx="46" ry="22" transform="rotate(-20 1236 444)" fill="#ffffff"/><ellipse cx="1238" cy="506" rx="46" ry="17" transform="rotate(12 1238 506)" fill="#ffffff"/><ellipse cx="1157" cy="464" rx="16" ry="28" transform="rotate(0 1157 464)" fill="#ffffff"/><ellipse cx="1312" cy="500" rx="14" ry="24" transform="rotate(0 1312 500)" fill="#f2f2f2"/><path d="M1345 482 L1420 490" fill="none" stroke="#9e9e9e" stroke-width="10" stroke-linecap="round" stroke-linejoin="round"/></g></g>
<path d="M1352 400 L1366 424 L1374 440" stroke="#000" stroke-width="8" stroke-linecap="round" fill="none" filter="url(#bl3)" opacity="0.9"/>
<g filter="url(#cm)" style="isolation:isolate"><path d="M1650 383 C1664 380 1674 377 1685 368 C1700 355 1706 340 1725 340 C1744 340 1750 355 1765 368 C1776 377 1786 380 1800 383 L1757 384 L1692 384Z" fill="url(#R10)"/><path d="M1650 447 C1664 450 1674 453 1685 462 C1700 475 1706 490 1725 490 C1744 490 1750 475 1765 462 C1776 453 1786 450 1800 447 L1757 446 L1692 446Z" fill="url(#R11)"/><path fill-rule="evenodd" d="M1660 381 L1790 381 C1815 385 1823 400 1823 415 C1823 430 1815 445 1790 449 L1660 449 C1635 445 1627 430 1627 415 C1627 400 1635 385 1660 381Z M1692 382 C1689 400 1689 430 1692 448 L1757 448 C1760 430 1760 400 1757 382Z" fill="url(#R12)"/></g>
<path d="M1662 381.5 C1700 381 1750 381 1788 381.5 M1662 448.5 C1700 449 1750 449 1788 448.5" stroke="#ff10d0" stroke-width="1.6" opacity="0.9"/>
<path d="M1561 415 H1627 M1823 415 H1889" stroke="url(#wl4)" stroke-width="2"/>
<g filter="url(#cm)" style="isolation:isolate"><path d="M493 699 L647 699 L663 957 C630 960 600 961 569 961 C538 961 508 960 477 957Z" fill="url(#L13)"/><path d="M493 699 L647 699 L663 957 C630 960 600 961 569 961 C538 961 508 960 477 957Z" fill="url(#R14)" style="mix-blend-mode:lighten"/><path d="M493 699 L647 699 L663 957 C630 960 600 961 569 961 C538 961 508 960 477 957Z" fill="url(#R15)" style="mix-blend-mode:lighten"/><path d="M493 699 L647 699 L663 957 C630 960 600 961 569 961 C538 961 508 960 477 957Z" fill="url(#R16)" style="mix-blend-mode:lighten"/><path d="M493 699 L647 699 L663 957 C630 960 600 961 569 961 C538 961 508 960 477 957Z" fill="url(#R17)" style="mix-blend-mode:lighten"/><path d="M493 699 L647 699 L663 957 C630 960 600 961 569 961 C538 961 508 960 477 957Z" fill="url(#R18)" style="mix-blend-mode:lighten"/><path d="M493 699 L647 699 L663 957 C630 960 600 961 569 961 C538 961 508 960 477 957Z" fill="url(#R19)" style="mix-blend-mode:lighten"/></g>
<g filter="url(#cm)" style="isolation:isolate"><path d="M815 794 L909 765 L916 903 L822 910Z" fill="url(#L20)"/><path d="M1094 796 L1000 765 L992 903 L1089 910Z" fill="url(#L21)"/><path d="M907 696 C925 690 985 690 1001 696 L989 959 C970 964 938 964 920 959Z" fill="url(#L22)"/><g mask="url(#M23)"><path d="M907 696 C925 690 985 690 1001 696 L989 959 C970 964 938 964 920 959Z" fill="url(#L25)"/></g></g>
<g filter="url(#cm)" style="isolation:isolate"><path d="M1306 702 L1373 702 C1378 740 1390 800 1420 945 C1395 952 1365 955 1340 955 C1315 955 1285 952 1258 945 C1290 800 1302 740 1306 702Z" fill="#000"/><path d="M1306 702 L1373 702 C1378 740 1390 800 1420 945 C1395 952 1365 955 1340 955 C1315 955 1285 952 1258 945 C1290 800 1302 740 1306 702Z" fill="url(#R26)" style="mix-blend-mode:lighten"/><path d="M1306 702 L1373 702 C1378 740 1390 800 1420 945 C1395 952 1365 955 1340 955 C1315 955 1285 952 1258 945 C1290 800 1302 740 1306 702Z" fill="url(#R27)" style="mix-blend-mode:lighten"/><path d="M1306 702 L1373 702 C1378 740 1390 800 1420 945 C1395 952 1365 955 1340 955 C1315 955 1285 952 1258 945 C1290 800 1302 740 1306 702Z" fill="url(#R28)" style="mix-blend-mode:lighten"/><path d="M1306 702 L1373 702 C1378 740 1390 800 1420 945 C1395 952 1365 955 1340 955 C1315 955 1285 952 1258 945 C1290 800 1302 740 1306 702Z" fill="url(#R29)" style="mix-blend-mode:lighten"/><path d="M1306 702 L1373 702 C1378 740 1390 800 1420 945 C1395 952 1365 955 1340 955 C1315 955 1285 952 1258 945 C1290 800 1302 740 1306 702Z" fill="url(#R30)" style="mix-blend-mode:lighten"/><path d="M1306 702 L1373 702 C1378 740 1390 800 1420 945 C1395 952 1365 955 1340 955 C1315 955 1285 952 1258 945 C1290 800 1302 740 1306 702Z" fill="url(#R31)" style="mix-blend-mode:lighten"/><path d="M1306 702 L1373 702 C1378 740 1390 800 1420 945 C1395 952 1365 955 1340 955 C1315 955 1285 952 1258 945 C1290 800 1302 740 1306 702Z" fill="url(#R32)" style="mix-blend-mode:darken"/></g>
<path d="M1339.5 776 V932" stroke="#ff5a40" stroke-width="1.3" opacity="0.85"/>
<rect x="1332" y="842" width="15" height="15" fill="#0a6878"/><rect x="1332" y="800" width="15" height="15" fill="#1848c8" opacity="0.5"/>
<g filter="url(#cm)" style="isolation:isolate"><path d="M1639 708 C1680 700 1770 700 1815 708 L1802 772 L1775 901 L1765 953 L1689 953 L1677 901 L1651 772Z" fill="#1e1e1e"/><path d="M1639 708 C1680 700 1770 700 1815 708 L1802 772 L1775 901 L1765 953 L1689 953 L1677 901 L1651 772Z" fill="url(#R33)" style="mix-blend-mode:lighten"/><path d="M1639 708 C1680 700 1770 700 1815 708 L1802 772 L1775 901 L1765 953 L1689 953 L1677 901 L1651 772Z" fill="url(#R34)" style="mix-blend-mode:lighten"/><path d="M1639 708 C1680 700 1770 700 1815 708 L1802 772 L1775 901 L1765 953 L1689 953 L1677 901 L1651 772Z" fill="url(#R35)" style="mix-blend-mode:lighten"/><path d="M1639 708 C1680 700 1770 700 1815 708 L1802 772 L1775 901 L1765 953 L1689 953 L1677 901 L1651 772Z" fill="url(#R36)" style="mix-blend-mode:lighten"/><path d="M1639 708 C1680 700 1770 700 1815 708 L1802 772 L1775 901 L1765 953 L1689 953 L1677 901 L1651 772Z" fill="url(#R37)" style="mix-blend-mode:darken"/><path d="M1639 708 C1680 700 1770 700 1815 708 L1802 772 L1775 901 L1765 953 L1689 953 L1677 901 L1651 772Z" fill="url(#R38)" style="mix-blend-mode:darken"/><path d="M1651 772 L1566 812 L1588 921 L1677 901Z" fill="url(#R39)"/><path d="M1802 772 L1886 812 L1866 921 L1775 901Z" fill="url(#R40)"/></g>
<path d="M1652 780 L1668 848 L1676 900 M1798 780 L1783 848 L1775 900" stroke="#fff" stroke-width="1" stroke-dasharray="3 4" opacity="0.7"/></svg>
<svg style="left:0;top:0" width="1920" height="1080"><defs><linearGradient id="cb750_0" x1="0" y1="0" x2="0" y2="1"><stop offset="0" stop-color="#fffff4"/><stop offset="1" stop-color="#ffe891"/></linearGradient><linearGradient id="cb750_1" x1="0" y1="0" x2="0" y2="1"><stop offset="0" stop-color="#ffe88f"/><stop offset="1" stop-color="#ffa640"/></linearGradient><linearGradient id="cb750_2" x1="0" y1="0" x2="0" y2="1"><stop offset="0" stop-color="#ffa440"/><stop offset="1" stop-color="#ff1150"/></linearGradient><linearGradient id="cb750_3" x1="0" y1="0" x2="0" y2="1"><stop offset="0" stop-color="#ff1052"/><stop offset="1" stop-color="#e600fe"/></linearGradient><linearGradient id="cb750_4" x1="0" y1="0" x2="0" y2="1"><stop offset="0" stop-color="#e500ff"/><stop offset="1" stop-color="#3328f0"/></linearGradient><linearGradient id="cb750_5" x1="0" y1="0" x2="0" y2="1"><stop offset="0" stop-color="#3229f0"/><stop offset="1" stop-color="#167fc5"/></linearGradient><linearGradient id="cb750_6" x1="0" y1="0" x2="0" y2="1"><stop offset="0" stop-color="#1680c3"/><stop offset="1" stop-color="#085869"/></linearGradient><linearGradient id="cb750_7" x1="0" y1="0" x2="0" y2="1"><stop offset="0" stop-color="#085767"/><stop offset="1" stop-color="#000101"/></linearGradient><linearGradient id="cb750_8" x1="0" y1="0" x2="0" y2="1"><stop offset="0" stop-color="#000101"/><stop offset="1" stop-color="#085767"/></linearGradient><linearGradient id="cb750_9" x1="0" y1="0" x2="0" y2="1"><stop offset="0" stop-color="#085869"/><stop offset="1" stop-color="#1680c3"/></linearGradient><linearGradient id="cb750_10" x1="0" y1="0" x2="0" y2="1"><stop offset="0" stop-color="#167fc5"/><stop offset="1" stop-color="#3229f0"/></linearGradient><linearGradient id="cb750_11" x1="0" y1="0" x2="0" y2="1"><stop offset="0" stop-color="#3328f0"/><stop offset="1" stop-color="#e500ff"/></linearGradient><linearGradient id="cb750_12" x1="0" y1="0" x2="0" y2="1"><stop offset="0" stop-color="#e600fe"/><stop offset="1" stop-color="#ff1052"/></linearGradient><linearGradient id="cb750_13" x1="0" y1="0" x2="0" y2="1"><stop offset="0" stop-color="#ff1150"/><stop offset="1" stop-color="#ffa440"/></linearGradient><linearGradient id="cb750_14" x1="0" y1="0" x2="0" y2="1"><stop offset="0" stop-color="#ffa640"/><stop offset="1" stop-color="#ffe88f"/></linearGradient><linearGradient id="cb750_15" x1="0" y1="0" x2="0" y2="1"><stop offset="0" stop-color="#ffe891"/><stop offset="1" stop-color="#fffff4"/></linearGradient></defs><rect x="750" y="219.00" width="7" height="24.62" fill="url(#cb750_0)"/><rect x="750" y="243.62" width="7" height="24.62" fill="url(#cb750_1)"/><rect x="750" y="268.25" width="7" height="24.62" fill="url(#cb750_2)"/><rect x="750" y="292.88" width="7" height="24.62" fill="url(#cb750_3)"/><rect x="750" y="317.50" width="7" height="24.62" fill="url(#cb750_4)"/><rect x="750" y="342.12" width="7" height="24.62" fill="url(#cb750_5)"/><rect x="750" y="366.75" width="7" height="24.62" fill="url(#cb750_6)"/><rect x="750" y="391.38" width="7" height="24.62" fill="url(#cb750_7)"/><rect x="750" y="416.00" width="7" height="24.62" fill="url(#cb750_8)"/><rect x="750" y="440.62" width="7" height="24.62" fill="url(#cb750_9)"/><rect x="750" y="465.25" width="7" height="24.62" fill="url(#cb750_10)"/><rect x="750" y="489.88" width="7" height="24.62" fill="url(#cb750_11)"/><rect x="750" y="514.50" width="7" height="24.62" fill="url(#cb750_12)"/><rect x="750" y="539.12" width="7" height="24.62" fill="url(#cb750_13)"/><rect x="750" y="563.75" width="7" height="24.62" fill="url(#cb750_14)"/><rect x="750" y="588.38" width="7" height="24.62" fill="url(#cb750_15)"/><rect x="749.5" y="218.5" width="8" height="395.0" fill="none" stroke="#000" stroke-width="1.2"/><path d="M750 243.62 H757" stroke="#000" stroke-width="1"/><path d="M750 268.25 H757" stroke="#000" stroke-width="1"/><path d="M750 292.88 H757" stroke="#000" stroke-width="1"/><path d="M750 317.50 H757" stroke="#000" stroke-width="1"/><path d="M750 342.12 H757" stroke="#000" stroke-width="1"/><path d="M750 366.75 H757" stroke="#000" stroke-width="1"/><path d="M750 391.38 H757" stroke="#000" stroke-width="1"/><path d="M750 416.00 H757" stroke="#000" stroke-width="1"/><path d="M750 440.62 H757" stroke="#000" stroke-width="1"/><path d="M750 465.25 H757" stroke="#000" stroke-width="1"/><path d="M750 489.88 H757" stroke="#000" stroke-width="1"/><path d="M750 514.50 H757" stroke="#000" stroke-width="1"/><path d="M750 539.12 H757" stroke="#000" stroke-width="1"/><path d="M750 563.75 H757" stroke="#000" stroke-width="1"/><path d="M750 588.38 H757" stroke="#000" stroke-width="1"/><text x="744" y="228.6" text-anchor="end" font-family="Liberation Sans" font-size="22.6" fill="#000">100</text><text x="744" y="253.1" text-anchor="end" font-family="Liberation Sans" font-size="22.6" fill="#000">87,5</text><text x="744" y="277.6" text-anchor="end" font-family="Liberation Sans" font-size="22.6" fill="#000">75</text><text x="744" y="302.1" text-anchor="end" font-family="Liberation Sans" font-size="22.6" fill="#000">62,5</text><text x="744" y="326.6" text-anchor="end" font-family="Liberation Sans" font-size="22.6" fill="#000">50</text><text x="744" y="351.1" text-anchor="end" font-family="Liberation Sans" font-size="22.6" fill="#000">37,5</text><text x="744" y="375.6" text-anchor="end" font-family="Liberation Sans" font-size="22.6" fill="#000">25</text><text x="744" y="400.1" text-anchor="end" font-family="Liberation Sans" font-size="22.6" fill="#000">12,5</text><text x="744" y="424.6" text-anchor="end" font-family="Liberation Sans" font-size="22.6" fill="#000">0</text><text x="744" y="449.1" text-anchor="end" font-family="Liberation Sans" font-size="22.6" fill="#000">-12,5</text><text x="744" y="473.6" text-anchor="end" font-family="Liberation Sans" font-size="22.6" fill="#000">-25</text><text x="744" y="498.1" text-anchor="end" font-family="Liberation Sans" font-size="22.6" fill="#000">-37,5</text><text x="744" y="522.6" text-anchor="end" font-family="Liberation Sans" font-size="22.6" fill="#000">-50</text><text x="744" y="547.1" text-anchor="end" font-family="Liberation Sans" font-size="22.6" fill="#000">-62,5</text><text x="744" y="571.6" text-anchor="end" font-family="Liberation Sans" font-size="22.6" fill="#000">-75</text><text x="744" y="596.1" text-anchor="end" font-family="Liberation Sans" font-size="22.6" fill="#000">-87,5</text><text x="744" y="620.6" text-anchor="end" font-family="Liberation Sans" font-size="22.6" fill="#000">-100</text><defs><linearGradient id="cb1521_0" x1="0" y1="0" x2="0" y2="1"><stop offset="0" stop-color="#fffff4"/><stop offset="1" stop-color="#ffe891"/></linearGradient><linearGradient id="cb1521_1" x1="0" y1="0" x2="0" y2="1"><stop offset="0" stop-color="#ffe88f"/><stop offset="1" stop-color="#ffa640"/></linearGradient><linearGradient id="cb1521_2" x1="0" y1="0" x2="0" y2="1"><stop offset="0" stop-color="#ffa440"/><stop offset="1" stop-color="#ff1150"/></linearGradient><linearGradient id="cb1521_3" x1="0" y1="0" x2="0" y2="1"><stop offset="0" stop-color="#ff1052"/><stop offset="1" stop-color="#e600fe"/></linearGradient><linearGradient id="cb1521_4" x1="0" y1="0" x2="0" y2="1"><stop offset="0" stop-color="#e500ff"/><stop offset="1" stop-color="#3328f0"/></linearGradient><linearGradient id="cb1521_5" x1="0" y1="0" x2="0" y2="1"><stop offset="0" stop-color="#3229f0"/><stop offset="1" stop-color="#167fc5"/></linearGradient><linearGradient id="cb1521_6" x1="0" y1="0" x2="0" y2="1"><stop offset="0" stop-color="#1680c3"/><stop offset="1" stop-color="#085869"/></linearGradient><linearGradient id="cb1521_7" x1="0" y1="0" x2="0" y2="1"><stop offset="0" stop-color="#085767"/><stop offset="1" stop-color="#000101"/></linearGradient><linearGradient id="cb1521_8" x1="0" y1="0" x2="0" y2="1"><stop offset="0" stop-color="#000101"/><stop offset="1" stop-color="#085767"/></linearGradient><linearGradient id="cb1521_9" x1="0" y1="0" x2="0" y2="1"><stop offset="0" stop-color="#085869"/><stop offset="1" stop-color="#1680c3"/></linearGradient><linearGradient id="cb1521_10" x1="0" y1="0" x2="0" y2="1"><stop offset="0" stop-color="#167fc5"/><stop offset="1" stop-color="#3229f0"/></linearGradient><linearGradient id="cb1521_11" x1="0" y1="0" x2="0" y2="1"><stop offset="0" stop-color="#3328f0"/><stop offset="1" stop-color="#e500ff"/></linearGradient><linearGradient id="cb1521_12" x1="0" y1="0" x2="0" y2="1"><stop offset="0" stop-color="#e600fe"/><stop offset="1" stop-color="#ff1052"/></linearGradient><linearGradient id="cb1521_13" x1="0" y1="0" x2="0" y2="1"><stop offset="0" stop-color="#ff1150"/><stop offset="1" stop-color="#ffa440"/></linearGradient><linearGradient id="cb1521_14" x1="0" y1="0" x2="0" y2="1"><stop offset="0" stop-color="#ffa640"/><stop offset="1" stop-color="#ffe88f"/></linearGradient><linearGradient id="cb1521_15" x1="0" y1="0" x2="0" y2="1"><stop offset="0" stop-color="#ffe891"/><stop offset="1" stop-color="#fffff4"/></linearGradient></defs><rect x="1521" y="219.00" width="7" height="24.62" fill="url(#cb1521_0)"/><rect x="1521" y="243.62" width="7" height="24.62" fill="url(#cb1521_1)"/><rect x="1521" y="268.25" width="7" height="24.62" fill="url(#cb1521_2)"/><rect x="1521" y="292.88" width="7" height="24.62" fill="url(#cb1521_3)"/><rect x="1521" y="317.50" width="7" height="24.62" fill="url(#cb1521_4)"/><rect x="1521" y="342.12" width="7" height="24.62" fill="url(#cb1521_5)"/><rect x="1521" y="366.75" width="7" height="24.62" fill="url(#cb1521_6)"/><rect x="1521" y="391.38" width="7" height="24.62" fill="url(#cb1521_7)"/><rect x="1521" y="416.00" width="7" height="24.62" fill="url(#cb1521_8)"/><rect x="1521" y="440.62" width="7" height="24.62" fill="url(#cb1521_9)"/><rect x="1521" y="465.25" width="7" height="24.62" fill="url(#cb1521_10)"/><rect x="1521" y="489.88" width="7" height="24.62" fill="url(#cb1521_11)"/><rect x="1521" y="514.50" width="7" height="24.62" fill="url(#cb1521_12)"/><rect x="1521" y="539.12" width="7" height="24.62" fill="url(#cb1521_13)"/><rect x="1521" y="563.75" width="7" height="24.62" fill="url(#cb1521_14)"/><rect x="1521" y="588.38" width="7" height="24.62" fill="url(#cb1521_15)"/><rect x="1520.5" y="218.5" width="8" height="395.0" fill="none" stroke="#000" stroke-width="1.2"/><path d="M1521 243.62 H1528" stroke="#000" stroke-width="1"/><path d="M1521 268.25 H1528" stroke="#000" stroke-width="1"/><path d="M1521 292.88 H1528" stroke="#000" stroke-width="1"/><path d="M1521 317.50 H1528" stroke="#000" stroke-width="1"/><path d="M1521 342.12 H1528" stroke="#000" stroke-width="1"/><path d="M1521 366.75 H1528" stroke="#000" stroke-width="1"/><path d="M1521 391.38 H1528" stroke="#000" stroke-width="1"/><path d="M1521 416.00 H1528" stroke="#000" stroke-width="1"/><path d="M1521 440.62 H1528" stroke="#000" stroke-width="1"/><path d="M1521 465.25 H1528" stroke="#000" stroke-width="1"/><path d="M1521 489.88 H1528" stroke="#000" stroke-width="1"/><path d="M1521 514.50 H1528" stroke="#000" stroke-width="1"/><path d="M1521 539.12 H1528" stroke="#000" stroke-width="1"/><path d="M1521 563.75 H1528" stroke="#000" stroke-width="1"/><path d="M1521 588.38 H1528" stroke="#000" stroke-width="1"/><text x="1515" y="228.6" text-anchor="end" font-family="Liberation Sans" font-size="22.6" fill="#000">100</text><text x="1515" y="253.1" text-anchor="end" font-family="Liberation Sans" font-size="22.6" fill="#000">87,5</text><text x="1515" y="277.6" text-anchor="end" font-family="Liberation Sans" font-size="22.6" fill="#000">75</text><text x="1515" y="302.1" text-anchor="end" font-family="Liberation Sans" font-size="22.6" fill="#000">62,5</text><text x="1515" y="326.6" text-anchor="end" font-family="Liberation Sans" font-size="22.6" fill="#000">50</text><text x="1515" y="351.1" text-anchor="end" font-family="Liberation Sans" font-size="22.6" fill="#000">37,5</text><text x="1515" y="375.6" text-anchor="end" font-family="Liberation Sans" font-size="22.6" fill="#000">25</text><text x="1515" y="400.1" text-anchor="end" font-family="Liberation Sans" font-size="22.6" fill="#000">12,5</text><text x="1515" y="424.6" text-anchor="end" font-family="Liberation Sans" font-size="22.6" fill="#000">0</text><text x="1515" y="449.1" text-anchor="end" font-family="Liberation Sans" font-size="22.6" fill="#000">-12,5</text><text x="1515" y="473.6" text-anchor="end" font-family="Liberation Sans" font-size="22.6" fill="#000">-25</text><text x="1515" y="498.1" text-anchor="end" font-family="Liberation Sans" font-size="22.6" fill="#000">-37,5</text><text x="1515" y="522.6" text-anchor="end" font-family="Liberation Sans" font-size="22.6" fill="#000">-50</text><text x="1515" y="547.1" text-anchor="end" font-family="Liberation Sans" font-size="22.6" fill="#000">-62,5</text><text x="1515" y="571.6" text-anchor="end" font-family="Liberation Sans" font-size="22.6" fill="#000">-75</text><text x="1515" y="596.1" text-anchor="end" font-family="Liberation Sans" font-size="22.6" fill="#000">-87,5</text><text x="1515" y="620.6" text-anchor="end" font-family="Liberation Sans" font-size="22.6" fill="#000">-100</text><g transform="translate(0 0)" fill="none" stroke-linecap="square"><path d="M388 567 L402 582 M402 567 L388 582" stroke="#ff0000" stroke-width="1.6"/><path d="M400 586 L414 590" stroke="#ff2020" stroke-width="2"/><path d="M395 583.5 H405.5 L394.5 597.5 H406" stroke="#000" stroke-width="2"/><path d="M406 597 L414 590" stroke="#000" stroke-width="2.5"/><path d="M408 595 L413.5 603 L420 594 M413.5 603 V610 M414 591 V603" stroke="#0000ff" stroke-width="1.8"/></g><g transform="translate(771 0)" fill="none" stroke-linecap="square"><path d="M388 567 L402 582 M402 567 L388 582" stroke="#ff0000" stroke-width="1.6"/><path d="M400 586 L414 590" stroke="#ff2020" stroke-width="2"/><path d="M395 583.5 H405.5 L394.5 597.5 H406" stroke="#000" stroke-width="2"/><path d="M406 597 L414 590" stroke="#000" stroke-width="2.5"/><path d="M408 595 L413.5 603 L420 594 M413.5 603 V610 M414 591 V603" stroke="#0000ff" stroke-width="1.8"/></g><g transform="translate(0 0)" fill="none"><path d="M799 557 V563" stroke="#0000ff" stroke-width="2.2"/><path d="M800.5 590 V573" stroke="#3030ff" stroke-width="2.5"/><path d="M797.5 574 L800.5 570 L803.5 574Z" fill="#0000c0"/><path d="M794 573.5 H805.5 L794.5 588 H806" stroke="#000" stroke-width="2"/><path d="M802 590 H818" stroke="#e00000" stroke-width="2.2"/><path d="M817 587.5 L821 590 L817 592.5Z" fill="#600"/><path d="M814.5 573.5 L828 588.5 M828 573.5 L814.5 588.5" stroke="#ff0000" stroke-width="1.6"/><circle cx="800.5" cy="590.5" r="2.6" fill="#000"/></g><g transform="translate(770 0)" fill="none"><path d="M799 557 V563" stroke="#0000ff" stroke-width="2.2"/><path d="M800.5 590 V573" stroke="#3030ff" stroke-width="2.5"/><path d="M797.5 574 L800.5 570 L803.5 574Z" fill="#0000c0"/><path d="M794 573.5 H805.5 L794.5 588 H806" stroke="#000" stroke-width="2"/><path d="M802 590 H818" stroke="#e00000" stroke-width="2.2"/><path d="M817 587.5 L821 590 L817 592.5Z" fill="#600"/><path d="M814.5 573.5 L828 588.5 M828 573.5 L814.5 588.5" stroke="#ff0000" stroke-width="1.6"/><circle cx="800.5" cy="590.5" r="2.6" fill="#000"/></g><g transform="translate(0 0)" fill="none"><path d="M413.5 969.5 L407.5 976.5 H419" stroke="#000" stroke-width="2"/><path d="M414.5 1001 V984" stroke="#111" stroke-width="2.4"/><path d="M411.5 985 L414.5 981 L417.5 985Z" fill="#000"/><path d="M406.5 985.5 L420 1000.5 M420 985.5 L406.5 1000.5" stroke="#ff0000" stroke-width="1.6"/><path d="M416 1001.5 H433" stroke="#1a1ae0" stroke-width="2.2"/><path d="M432 999 L436 1001.5 L432 1004Z" fill="#000060"/><path d="M432.5 985.5 L439 993 L445.5 985.5 M439 993 V1001" stroke="#0000ff" stroke-width="1.8"/><circle cx="414" cy="1002" r="3" fill="#c00000"/></g><g transform="translate(772 0)" fill="none"><path d="M413.5 969.5 L407.5 976.5 H419" stroke="#000" stroke-width="2"/><path d="M414.5 1001 V984" stroke="#111" stroke-width="2.4"/><path d="M411.5 985 L414.5 981 L417.5 985Z" fill="#000"/><path d="M406.5 985.5 L420 1000.5 M420 985.5 L406.5 1000.5" stroke="#ff0000" stroke-width="1.6"/><path d="M416 1001.5 H433" stroke="#1a1ae0" stroke-width="2.2"/><path d="M432 999 L436 1001.5 L432 1004Z" fill="#000060"/><path d="M432.5 985.5 L439 993 L445.5 985.5 M439 993 V1001" stroke="#0000ff" stroke-width="1.8"/><circle cx="414" cy="1002" r="3" fill="#c00000"/></g><g transform="translate(0 0)" fill="none"><path d="M799.5 969.5 L793.5 976.5 H805" stroke="#000" stroke-width="2"/><path d="M792.5 985.5 L799.5 994 L806 985.5 M799.5 994 V1002" stroke="#0000ff" stroke-width="1.8"/><path d="M800.5 1001 V984" stroke="#444" stroke-width="2.4"/><path d="M797.5 985 L800.5 981 L803.5 985Z" fill="#000"/><path d="M801 1001.5 H818" stroke="#e01010" stroke-width="2.2"/><path d="M817 999 L821 1001.5 L817 1004Z" fill="#400"/><path d="M814.5 985.5 L828 1000.5 M828 985.5 L814.5 1000.5" stroke="#ff0000" stroke-width="1.6"/><circle cx="800" cy="1002" r="2.2" fill="#0000a0"/></g><g transform="translate(771 0)" fill="none"><path d="M799.5 969.5 L793.5 976.5 H805" stroke="#000" stroke-width="2"/><path d="M792.5 985.5 L799.5 994 L806 985.5 M799.5 994 V1002" stroke="#0000ff" stroke-width="1.8"/><path d="M800.5 1001 V984" stroke="#444" stroke-width="2.4"/><path d="M797.5 985 L800.5 981 L803.5 985Z" fill="#000"/><path d="M801 1001.5 H818" stroke="#e01010" stroke-width="2.2"/><path d="M817 999 L821 1001.5 L817 1004Z" fill="#400"/><path d="M814.5 985.5 L828 1000.5 M828 985.5 L814.5 1000.5" stroke="#ff0000" stroke-width="1.6"/><circle cx="800" cy="1002" r="2.2" fill="#0000a0"/></g></svg>
<!-- scrollbar -->
<div class="a" style="left:83px;top:1018px;width:293px;height:21px;background:linear-gradient(90deg,#f0efe9,#f7f6f2 60%,#fff 75%,#f2f2ee)"></div>
<div class="a" style="left:84px;top:1018px;width:20px;height:20px;border:1px solid #6f6f78;background:linear-gradient(#f4f3f8,#c9c6dc);border-radius:1px"></div>
<svg style="left:90px;top:1023px" width="6" height="10" viewBox="0 0 6 10"><path d="M5.5 0 V10 L0 5Z" fill="#3a3a4a"/></svg>
<div class="a" style="left:105px;top:1018px;width:94px;height:20px;border:1px solid #75737f;background:linear-gradient(#f2f1f7,#c8c5da);border-radius:1px"></div>
<div class="a" style="left:364px;top:1018px;width:13px;height:20px;border:1px solid #6f6f78;border-right:none;background:linear-gradient(#f4f3f8,#c9c6dc)"></div>
<svg style="left:370px;top:1023px" width="6" height="10" viewBox="0 0 6 10"><path d="M0 0 V10 L5.5 5Z" fill="#3a3a4a"/></svg>

<!-- status bar -->
<div class="a" style="left:1px;top:1039px;width:1918px;height:1px;background:#b4c0b6"></div>
<div class="a" style="left:1px;top:1040px;width:1918px;height:38px;background:linear-gradient(90deg,#e9f0ea,#f0f5f0 50%,#fbfcfb 85%,#eef3ef)"></div>
<div class="a" style="left:1px;top:1077px;width:1918px;height:3px;background:#8c9a8f"></div>
<div class="a" style="left:5px;top:1044px;width:83px;height:30px;border:1px solid #c6cdc7;background:linear-gradient(#ffffff,#f4f6f4)"></div>
<div class="t" style="left:12px;top:1052px;font-size:15.3px;color:#262626">Show Log</div>
<svg style="left:83px;top:1040px" width="710" height="37" viewBox="0 0 710 37">
<path d="M130 0 H707 C704 10 702 28 699 38 H135 Z" fill="#cfe0d2"/>
<path d="M270 38 C272 30 273 22 274 15 C275 22 276 30 278 38Z" fill="#e9f2ea"/>
<path d="M483 38 C485 30 486 22 487 15 C488 22 489 30 491 38Z" fill="#e9f2ea"/>
<path d="M589 38 C591 30 592 22 593 15 C594 22 595 30 597 38Z" fill="#e9f2ea"/>
<path d="M1 0 H134 C131 10 127 28 123 38 H12 C8 28 5 10 1 0Z" fill="#dfa35f" stroke="#d98a3a" stroke-width="1"/>
</svg>
<div class="t" style="left:103px;top:1051px;font-size:16.2px;font-weight:700;color:#fff">ANIMATION</div>
<div class="t" style="left:227px;top:1052px;font-size:15px;letter-spacing:-0.8px;color:#2a2a2a">FRF SYNTHESIS</div>
<div class="t" style="left:373px;top:1052px;font-size:15px;color:#2a2a2a">MODE NORMALIZATION</div>
<div class="t" style="left:583px;top:1052px;font-size:14.7px;color:#2a2a2a">AUTOMAC</div>
<div class="t" style="left:688px;top:1052px;font-size:14.5px;color:#2a2a2a">CROSSMAC</div>

<div class="sep" style="left:1392px;top:1046px;height:28px;background:#d2d8d3"></div>
<svg style="left:1405px;top:1050px" width="19" height="21" viewBox="0 0 19 21"><g fill="#7a7a7a"><ellipse cx="9.5" cy="3" rx="8.5" ry="2.5"/><rect x="1" y="3" width="17" height="15"/><ellipse cx="9.5" cy="18" rx="8.5" ry="2.5"/></g><g stroke="#ededed" stroke-width="1.1" fill="none"><path d="M1 6.5 Q9.5 9 18 6.5 M1 10.5 Q9.5 13 18 10.5 M1 14.5 Q9.5 17 18 14.5"/></g></svg>
<div class="t" style="left:1429px;top:1054px;font-size:13.8px;color:#3a3a3a">BKConnectDb (SQL Server - PULSE)</div>
<div class="sep" style="left:1667px;top:1046px;height:28px;background:#d2d8d3"></div>
<svg style="left:1679px;top:1047px" width="18" height="26" viewBox="0 0 18 26"><rect x="1" y="1" width="16" height="24" rx="3" fill="#fff" stroke="#555" stroke-width="1.4"/><rect x="4" y="17" width="10" height="5" fill="#7b8494"/></svg>
<div class="t" style="left:1705px;top:1050px;font-size:21.5px;font-weight:700;color:#111;letter-spacing:0.3px">Brüel &amp; Kjær</div>
<svg style="left:1846px;top:1048px" width="50" height="26" viewBox="0 0 50 26"><g fill="#1a62b0"><path d="M1 7 H6 C8 7 8 10 6 10.5 C8.5 11 8.5 14.5 6 14.5 H1Z"/><rect x="7" y="11" width="43" height="2"/><circle cx="22" cy="13" r="12"/><path d="M38 14 H41 V17 L44 14 H48 L44 18 L48 22 H44 L41 19 V22 H38Z" transform="translate(0,-3)"/></g><g stroke="#e8f0f8" stroke-width="0.9" fill="none"><ellipse cx="22" cy="13" rx="4" ry="11.5"/><ellipse cx="22" cy="13" rx="8.5" ry="11.5"/><path d="M10.5 8 H33.5 M10.5 18 H33.5 M13 4 H31 M13 22 H31"/></g></svg>
<svg style="left:1900px;top:1062px" width="16" height="14" viewBox="0 0 16 14"><g fill="#b8bdb9"><rect x="11" y="1" width="2" height="2"/><rect x="7" y="5" width="2" height="2"/><rect x="11" y="5" width="2" height="2"/><rect x="3" y="9" width="2" height="2"/><rect x="7" y="9" width="2" height="2"/><rect x="11" y="9" width="2" height="2"/></g></svg>

</body></html>
